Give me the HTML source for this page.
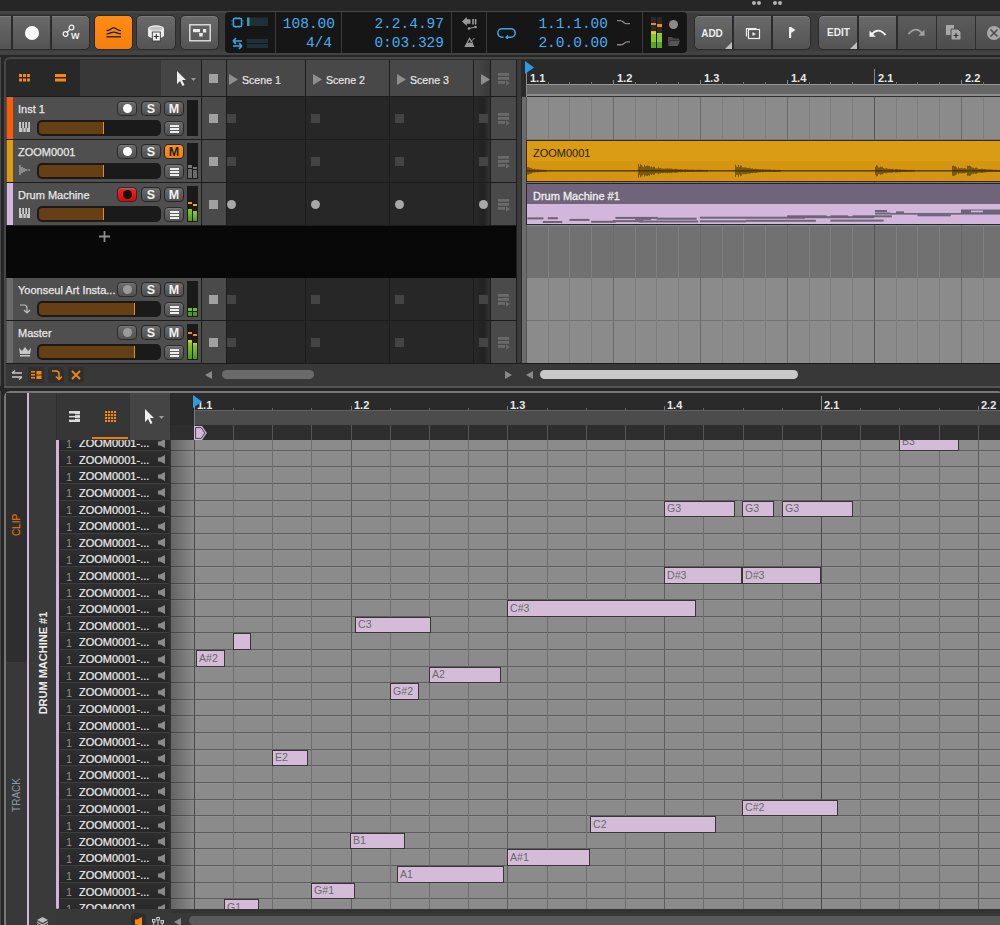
<!DOCTYPE html><html><head><meta charset="utf-8"><style>
*{margin:0;padding:0;box-sizing:border-box}
html,body{width:1000px;height:925px;overflow:hidden;background:#2b2b2b;font-family:"Liberation Sans",sans-serif}
.a{position:absolute}
.t{position:absolute;white-space:nowrap;line-height:1}
.btn{position:absolute;background:linear-gradient(#6a6a6a,#525252);border:1px solid #2a2a2a;border-radius:4px;box-shadow:inset 0 1px 0 #7a7a7a}
.sb{position:absolute;background:linear-gradient(#6c6c6c,#4e4e4e);border:1px solid #262626;border-radius:4px;color:#f2f2f2;font-weight:bold;font-size:12.5px;text-align:center;line-height:14px}
.mono{font-family:"Liberation Mono",monospace;color:#46aef2}
</style></head><body>
<div class="a " style="left:0px;top:0px;width:1000px;height:11px;background:#262626"></div><div class="a " style="left:0px;top:11px;width:1000px;height:44px;background:#3c3c3c;border-top:2px solid #474747;border-bottom:4px solid #424242"></div><div class="a " style="left:0px;top:55px;width:1000px;height:3px;background:#262626"></div><div class="a " style="left:752px;top:1px;width:4px;height:4px;background:#b4b4b4;border-radius:50%"></div><div class="a " style="left:757px;top:1px;width:4px;height:4px;background:#b4b4b4;border-radius:50%"></div><div class="a " style="left:773px;top:1px;width:4px;height:4px;background:#b4b4b4;border-radius:50%"></div><div class="a " style="left:778px;top:1px;width:4px;height:4px;background:#b4b4b4;border-radius:50%"></div><div class="a " style="left:-5px;top:15px;width:17px;height:35px;background:linear-gradient(#6a6a6a,#535353);border:1px solid #2b2b2b;box-shadow:inset 0 1px 0 #7c7c7c;border-radius:0 0 0 0"></div><div class="a " style="left:12px;top:15px;width:39px;height:35px;background:linear-gradient(#6a6a6a,#535353);border:1px solid #2b2b2b;box-shadow:inset 0 1px 0 #7c7c7c;"><div class="a" style="left:12px;top:10px;width:14px;height:14px;border-radius:50%;background:#fff"></div></div><div class="a " style="left:51px;top:15px;width:39px;height:35px;background:linear-gradient(#6a6a6a,#535353);border:1px solid #2b2b2b;box-shadow:inset 0 1px 0 #7c7c7c;border-radius:0 5px 5px 0"><svg class="a" style="left:10px;top:8px" width="20" height="18" viewBox="0 0 20 18"><circle cx="3.5" cy="10" r="2.3" fill="none" stroke="#eee" stroke-width="1.3"/><circle cx="9.5" cy="3.5" r="2.3" fill="none" stroke="#eee" stroke-width="1.3"/><line x1="5" y1="8.5" x2="8" y2="5.2" stroke="#eee" stroke-width="1.3"/><text x="9" y="15" font-family="Liberation Sans" font-weight="bold" font-size="9" fill="#eee">W</text></svg></div><div class="a " style="left:94px;top:15px;width:39px;height:35px;background:linear-gradient(#ff8c14,#f47f0c);border:1px solid #2b2b2b;border-radius:5px"><svg class="a" style="left:11px;top:11px" width="16" height="13" viewBox="0 0 16 13"><g fill="none" stroke="#1a1a1a" stroke-width="1.3"><path d="M0.5 3.7C4 3.7 5 0.9 7.75 0.9S11.5 3.7 15 3.7"/><path d="M0.5 6.8C4 6.8 5 5.1 7.75 5.1S11.5 6.8 15 6.8"/><path d="M0.5 9.8H15"/></g></svg></div><div class="a " style="left:136px;top:15px;width:40px;height:35px;background:linear-gradient(#6a6a6a,#535353);border:1px solid #2b2b2b;box-shadow:inset 0 1px 0 #7c7c7c;border-radius:5px"></div><svg class="a" style="left:147px;top:25px" width="19" height="17" viewBox="0 0 19 17"><path d="M1 3.2A8 2.9 0 0 1 17 3.2V10.5A8 2.9 0 0 1 1 10.5Z" fill="#ececec"/><ellipse cx="9" cy="3.5" rx="6.8" ry="2" fill="#c4c4c4"/><rect x="5.3" y="7" width="8" height="9" fill="#f4f4f4" stroke="#3a3a3a" stroke-width="0.9"/><path d="M9.3 9v5M6.8 11.5h5" stroke="#2a2a2a" stroke-width="1.1"/></svg><div class="a " style="left:180px;top:15px;width:39px;height:35px;background:linear-gradient(#6a6a6a,#535353);border:1px solid #2b2b2b;box-shadow:inset 0 1px 0 #7c7c7c;border-radius:5px"></div><svg class="a" style="left:189px;top:24px" width="22" height="18" viewBox="0 0 22 18"><rect x="0.8" y="0.8" width="20.4" height="16" fill="none" stroke="#ececec" stroke-width="1.3"/><rect x="4" y="5" width="7" height="3.2" fill="#ececec"/><rect x="14" y="5" width="3.2" height="3.5" fill="#ececec"/><rect x="10.2" y="9" width="3.5" height="3.5" fill="#ececec"/></svg><div class="a " style="left:225px;top:12px;width:462px;height:41px;background:#161616;border-radius:4px"></div><div class="a " style="left:275px;top:12px;width:1px;height:41px;background:#3c3c3c"></div><div class="a " style="left:341px;top:12px;width:1px;height:41px;background:#3c3c3c"></div><div class="a " style="left:451px;top:12px;width:1px;height:41px;background:#3c3c3c"></div><div class="a " style="left:486px;top:12px;width:1px;height:41px;background:#3c3c3c"></div><div class="a " style="left:642px;top:12px;width:1px;height:41px;background:#3c3c3c"></div><svg class="a" style="left:231px;top:17px" width="40" height="34" viewBox="0 0 40 34"><rect x="2.5" y="1.5" width="8" height="8" rx="0.5" fill="none" stroke="#3aa6e8" stroke-width="1.4"/><g fill="#3aa6e8"><rect x="0.5" y="3.5" width="1.2" height="1"/><rect x="0.5" y="6.5" width="1.2" height="1"/><rect x="11.3" y="3.5" width="1.2" height="1"/><rect x="11.3" y="6.5" width="1.2" height="1"/><rect x="4.5" y="0" width="1" height="1"/><rect x="7.5" y="0" width="1" height="1"/><rect x="4.5" y="10" width="1" height="1"/><rect x="7.5" y="10" width="1" height="1"/></g><rect x="16" y="0.5" width="21" height="8.5" fill="#1e3038"/><rect x="16" y="0.5" width="2.5" height="8.5" fill="#3e9aa8"/><path d="M2 24h9M2 24l3-2.8M2 24l3 2.8M11 29H2M11 29l-3-2.8M11 29l-3 2.8" stroke="#3aa6e8" stroke-width="1.6" fill="none"/><rect x="16" y="22" width="21" height="4" fill="#1e3038"/><rect x="16" y="27" width="21" height="4" fill="#1e3038"/></svg><div class="t mono" style="left:279px;top:16.5px;font-size:14.5px;width:56px;text-align:right">108.00</div><div class="t mono" style="left:279px;top:35.5px;font-size:14.5px;width:53px;text-align:right">4/4</div><div class="t mono" style="left:338px;top:16.5px;font-size:14.5px;width:106px;text-align:right">2.2.4.97</div><div class="t mono" style="left:338px;top:35.5px;font-size:14.5px;width:106px;text-align:right">0:03.329</div><div class="t mono" style="left:498px;top:16.5px;font-size:14.5px;width:110px;text-align:right">1.1.1.00</div><div class="t mono" style="left:498px;top:35.5px;font-size:14.5px;width:110px;text-align:right">2.0.0.00</div><svg class="a" style="left:459px;top:17px" width="20" height="32" viewBox="0 0 20 32"><path d="M3 4.5L7.8 0V2.2H11.5V6.8H7.8V9z" fill="#9a9a9a"/><rect x="13.2" y="2" width="1.6" height="5.5" fill="#9a9a9a"/><rect x="15.8" y="2" width="1.6" height="5.5" fill="#9a9a9a"/><path d="M10 11.5L16.5 10" stroke="#9a9a9a" stroke-width="1"/><circle cx="10" cy="11.5" r="1.3" fill="#9a9a9a"/><circle cx="16.5" cy="10" r="1.3" fill="#9a9a9a"/><path d="M6 30L10.5 21.5 13.5 26" fill="none" stroke="#9a9a9a" stroke-width="1.2"/><path d="M6 30L8 26H13.5L15.5 30z" fill="#9a9a9a"/><path d="M9.5 27L15.5 21" stroke="#9a9a9a" stroke-width="1"/></svg><svg class="a" style="left:497px;top:27px" width="20" height="12" viewBox="0 0 20 12"><path d="M6.5 10.2H5a4.2 4.2 0 0 1 0-8.4h9a4.2 4.2 0 0 1 0 8.4h-4" fill="none" stroke="#3aa6e8" stroke-width="1.5"/><path d="M8 10.3l3-2.6v5.2z" fill="#3aa6e8"/></svg><svg class="a" style="left:616px;top:18px" width="16" height="30" viewBox="0 0 16 30"><path d="M1 2.6H4.5C7 2.6 7.5 5.6 10 5.6H14M1 26.8H5.5C8 26.8 8.5 23.9 11 23.9H14" fill="none" stroke="#888" stroke-width="1.4"/></svg><div class="a " style="left:651px;top:17px;width:5px;height:31px;background:linear-gradient(#2a2a2a 0 18%,#f08a1e 18% 27%,#2a2a2a 27% 46%,#f0b020 46% 50%,#d8d040 50% 54%,#8ac826 54% 80%,#5aa820 80%)"></div><div class="a " style="left:657px;top:17px;width:5px;height:31px;background:linear-gradient(#2a2a2a 0 23%,#f08a1e 23% 32%,#2a2a2a 32% 51%,#b0c830 51% 56%,#8ac826 56% 80%,#5aa820 80%)"></div><div class="a " style="left:669px;top:20px;width:9px;height:9px;background:#8a8a8a;border-radius:50%"></div><svg class="a" style="left:667px;top:36px" width="14" height="11" viewBox="0 0 14 11"><path d="M1 1h4l1.5 1.5H12V4H3.5L1 10z" fill="#4a4a4a"/><path d="M3.5 4.5H13L11 10H1z" fill="#555"/></svg><div class="a " style="left:694px;top:15px;width:39px;height:35px;background:linear-gradient(#6a6a6a,#535353);border:1px solid #2b2b2b;box-shadow:inset 0 1px 0 #7c7c7c;border-radius:5px 0 0 5px"><div class="t" style="left:-2px;width:38px;text-align:center;top:12.5px;font-size:10px;font-weight:bold;color:#eee">ADD</div><div class="a" style="right:0;bottom:0;width:0;height:0;border-left:7px solid transparent;border-bottom:7px solid #bdbdbd"></div></div><div class="a " style="left:733px;top:15px;width:39px;height:35px;background:linear-gradient(#6a6a6a,#535353);border:1px solid #2b2b2b;box-shadow:inset 0 1px 0 #7c7c7c;"><svg class="a" style="left:11px;top:10px" width="16" height="14" viewBox="0 0 16 14"><rect x="3.5" y="3.5" width="11" height="9" fill="#555" stroke="#eee" stroke-width="1.2"/><path d="M1.5 10.5v-8h10" fill="none" stroke="#eee" stroke-width="1.2"/><path d="M7.5 6v4l3.5-2z" fill="#eee"/></svg></div><div class="a " style="left:772px;top:15px;width:39px;height:35px;background:linear-gradient(#6a6a6a,#535353);border:1px solid #2b2b2b;box-shadow:inset 0 1px 0 #7c7c7c;border-radius:0 5px 5px 0"><svg class="a" style="left:16px;top:11px" width="8" height="12" viewBox="0 0 8 12"><rect x="0" y="0" width="2.2" height="11" fill="#eee"/><path d="M2 0l4.5 3-4.5 3z" fill="#eee"/></svg></div><div class="a " style="left:818px;top:15px;width:40px;height:35px;background:linear-gradient(#6a6a6a,#535353);border:1px solid #2b2b2b;box-shadow:inset 0 1px 0 #7c7c7c;border-radius:5px 0 0 5px"><div class="t" style="left:0;width:39px;text-align:center;top:12px;font-size:10px;font-weight:bold;color:#eee">EDIT</div><div class="a" style="right:0;bottom:0;width:0;height:0;border-left:7px solid transparent;border-bottom:7px solid #bdbdbd"></div></div><div class="a " style="left:858px;top:15px;width:39px;height:35px;background:linear-gradient(#6a6a6a,#535353);border:1px solid #2b2b2b;box-shadow:inset 0 1px 0 #7c7c7c;"><svg class="a" style="left:8px;top:12px" width="22" height="12" viewBox="0 0 22 12"><path d="M4.5 6.5Q11 -1.5 18.5 7" fill="none" stroke="#f4f4f4" stroke-width="1.9"/><path d="M2.5 2.5v6.2h6.2z" fill="#f4f4f4"/></svg></div><div class="a " style="left:897px;top:15px;width:103px;height:35px;background:linear-gradient(#5c5c5c,#4c4c4c);border:1px solid #2b2b2b;border-right:none"></div><div class="a " style="left:936px;top:15px;width:1px;height:35px;background:#2e2e2e"></div><div class="a " style="left:975px;top:15px;width:1px;height:35px;background:#2e2e2e"></div><svg class="a" style="left:905px;top:27px" width="22" height="12" viewBox="0 0 22 12"><path d="M3.5 7Q11 -1.5 17.5 6.5" fill="none" stroke="#a0a0a0" stroke-width="1.9"/><path d="M19.5 2.5v6.2h-6.2z" fill="#a0a0a0"/></svg><svg class="a" style="left:946px;top:25px" width="18" height="16" viewBox="0 0 18 16"><rect x="0" y="0" width="8" height="10" fill="#a8a8a8"/><path d="M5 4h7l3 3v8H5z" fill="#a8a8a8" stroke="#4e4e4e" stroke-width="1"/><path d="M10 8v5M7.5 10.5h5" stroke="#333" stroke-width="1.2"/></svg><svg class="a" style="left:986px;top:25px" width="14" height="16" viewBox="0 0 14 16"><circle cx="8" cy="8" r="7" fill="#a8a8a8"/><path d="M4.5 4.5l7 7M11.5 4.5l-7 7" stroke="#4e4e4e" stroke-width="1.6"/></svg><div class="a " style="left:0px;top:57px;width:4px;height:868px;background:#262626"></div><div class="a " style="left:0px;top:57px;width:1px;height:868px;background:#4a4a4a"></div><div class="a " style="left:4px;top:57px;width:996px;height:332px;background:#2c2c2c;border:2px solid #474747;border-right:none;border-radius:6px 0 0 6px"></div><div class="a " style="left:6px;top:60px;width:74px;height:36px;background:#282828"></div><div class="a " style="left:80px;top:60px;width:81px;height:36px;background:#383838"></div><div class="a " style="left:161px;top:60px;width:40px;height:36px;background:#454545"></div><div class="a " style="left:201px;top:60px;width:1px;height:303px;background:#1c1c1c"></div><svg class="a" style="left:19px;top:74px" width="12" height="9" viewBox="0 0 12 9"><g fill="#f7870f"><rect x="0" y="0" width="3" height="3"/><rect x="4" y="0" width="3" height="3"/><rect x="8" y="0" width="3" height="3"/><rect x="0" y="4.5" width="3" height="3"/><rect x="4" y="4.5" width="3" height="3"/><rect x="8" y="4.5" width="3" height="3"/></g></svg><svg class="a" style="left:55px;top:74px" width="12" height="9" viewBox="0 0 12 9"><g fill="#f7870f"><rect x="0" y="0" width="11" height="3"/><rect x="0" y="4.5" width="11" height="3"/></g></svg><svg class="a" style="left:176px;top:71px" width="22" height="16" viewBox="0 0 22 16"><path d="M1 0v13l3-3 2.5 5 2-1-2.5-5h4z" fill="#eee"/><path d="M15 7h5l-2.5 3z" fill="#9a9a9a"/></svg><div class="a " style="left:202px;top:60px;width:24px;height:36px;background:#4a4a4a"></div><div class="a " style="left:209px;top:74px;width:9px;height:9px;background:#a0a0a0"></div><div class="a " style="left:227px;top:60px;width:78px;height:36px;background:#484848"></div><svg class="a" style="left:229px;top:74px" width="10" height="12" viewBox="0 0 10 12"><path d="M0 0l9 5.5L0 11z" fill="#8e8e8e"/></svg><div class="t" style="left:242px;top:74.5px;font-size:10.6px;color:#e6e6e6;-webkit-text-stroke:0.2px #e6e6e6">Scene 1</div><div class="a " style="left:306px;top:60px;width:83px;height:36px;background:#484848"></div><svg class="a" style="left:313px;top:74px" width="10" height="12" viewBox="0 0 10 12"><path d="M0 0l9 5.5L0 11z" fill="#8e8e8e"/></svg><div class="t" style="left:326px;top:74.5px;font-size:10.6px;color:#e6e6e6;-webkit-text-stroke:0.2px #e6e6e6">Scene 2</div><div class="a " style="left:390px;top:60px;width:83px;height:36px;background:#484848"></div><svg class="a" style="left:397px;top:74px" width="10" height="12" viewBox="0 0 10 12"><path d="M0 0l9 5.5L0 11z" fill="#8e8e8e"/></svg><div class="t" style="left:410px;top:74.5px;font-size:10.6px;color:#e6e6e6;-webkit-text-stroke:0.2px #e6e6e6">Scene 3</div><div class="a " style="left:474px;top:60px;width:16px;height:36px;background:linear-gradient(90deg,#484848,#3a3a3a)"></div><svg class="a" style="left:481px;top:74px" width="10" height="12" viewBox="0 0 10 12"><path d="M0 0l9 5.5L0 11z" fill="#8e8e8e"/></svg><div class="a " style="left:226px;top:60px;width:1px;height:303px;background:#1c1c1c"></div><div class="a " style="left:305px;top:60px;width:1px;height:303px;background:#1c1c1c"></div><div class="a " style="left:389px;top:60px;width:1px;height:303px;background:#1c1c1c"></div><div class="a " style="left:473px;top:60px;width:1px;height:303px;background:#1c1c1c"></div><div class="a " style="left:490px;top:60px;width:1px;height:303px;background:#1c1c1c"></div><div class="a " style="left:491px;top:60px;width:25px;height:36px;background:#4a4a4a"></div><svg class="a" style="left:498px;top:73px" width="13" height="13" viewBox="0 0 13 13"><g fill="#6a6a6a"><rect x="0" y="0" width="11" height="2.8"/><rect x="0" y="4" width="11" height="2.8"/><rect x="0" y="8" width="7" height="2.8"/><path d="M8 7.5l4 2.5-4 2.5z"/></g></svg><div class="a " style="left:6px;top:96px;width:510px;height:1px;background:#1c1c1c"></div><div class="a " style="left:6px;top:97px;width:195px;height:42px;background:#4f4f4f"></div><div class="a " style="left:7px;top:97px;width:6px;height:42px;background:#ff5a00"></div><div class="a " style="left:6px;top:139px;width:510px;height:1px;background:#1c1c1c"></div><div class="t" style="left:18px;top:104px;font-size:11px;color:#e8e8e8;-webkit-text-stroke:0.25px #e8e8e8">Inst 1</div><svg class="a" style="left:19px;top:122px" width="12" height="11" viewBox="0 0 12 11"><rect x="0" y="0" width="11" height="10" fill="#c8c8c8"/><g fill="#4f4f4f"><rect x="2" y="0" width="1.2" height="6"/><rect x="5" y="0" width="1.2" height="6"/><rect x="8" y="0" width="1.2" height="6"/><rect x="3.5" y="6" width="0.8" height="4"/><rect x="6.8" y="6" width="0.8" height="4"/></g></svg><div class="a " style="left:37px;top:120px;width:124px;height:16px;background:#1a1a1a;border-radius:5px"></div><div class="a " style="left:39px;top:122px;width:65px;height:12px;background:#663f15;border-radius:3px 0 0 3px"></div><div class="a " style="left:102.5px;top:122px;width:1.5px;height:12px;background:#ec8a1e"></div><div class="a btn" style="left:117px;top:101px;width:20px;height:15px;"><div class="a" style="left:5px;top:2px;width:9px;height:9px;border-radius:50%;background:#fff"></div></div><div class="sb" style="left:141px;top:101px;width:20px;height:15px">S</div><div class="sb" style="left:164px;top:101px;width:20px;height:15px">M</div><div class="a btn" style="left:164px;top:121px;width:20px;height:15px;"><div class="a" style="left:5px;top:3px;width:9px;height:2px;background:#eee"></div><div class="a" style="left:5px;top:6px;width:9px;height:2px;background:#eee"></div><div class="a" style="left:5px;top:9px;width:9px;height:2px;background:#eee"></div></div><div class="a " style="left:187px;top:100px;width:11px;height:36px;background:#1a1a1a"></div><div class="a " style="left:202px;top:97px;width:24px;height:42px;background:#4a4a4a"></div><div class="a " style="left:209px;top:114px;width:9px;height:9px;background:#a0a0a0"></div><div class="a " style="left:227px;top:97px;width:78px;height:42px;background:#272727"></div><div class="a " style="left:227px;top:114px;width:9px;height:9px;background:#444"></div><div class="a " style="left:306px;top:97px;width:83px;height:42px;background:#272727"></div><div class="a " style="left:311px;top:114px;width:9px;height:9px;background:#444"></div><div class="a " style="left:390px;top:97px;width:83px;height:42px;background:#272727"></div><div class="a " style="left:395px;top:114px;width:9px;height:9px;background:#444"></div><div class="a " style="left:474px;top:97px;width:16px;height:42px;background:linear-gradient(90deg,#282828,#222 60%,#333)"></div><div class="a " style="left:479px;top:114px;width:9px;height:9px;background:#444"></div><div class="a " style="left:491px;top:97px;width:25px;height:42px;background:#4a4a4a"></div><svg class="a" style="left:498px;top:113px" width="13" height="13" viewBox="0 0 13 13"><g fill="#6a6a6a"><rect x="0" y="0" width="11" height="2.8"/><rect x="0" y="4" width="11" height="2.8"/><rect x="0" y="8" width="7" height="2.8"/><path d="M8 7.5l4 2.5-4 2.5z"/></g></svg><div class="a " style="left:6px;top:140px;width:195px;height:42px;background:#4f4f4f"></div><div class="a " style="left:7px;top:140px;width:6px;height:42px;background:#e09a10"></div><div class="a " style="left:6px;top:182px;width:510px;height:1px;background:#1c1c1c"></div><div class="t" style="left:18px;top:147px;font-size:11px;color:#e8e8e8;-webkit-text-stroke:0.25px #e8e8e8">ZOOM0001</div><svg class="a" style="left:19px;top:164px" width="12" height="12" viewBox="0 0 12 12"><path d="M1 1v10M3 3v6M5 4v4M7 5v2M9 5.5v1M11 6h-1" stroke="#bcbcbc" stroke-width="1.1"/></svg><div class="a " style="left:37px;top:163px;width:124px;height:16px;background:#1a1a1a;border-radius:5px"></div><div class="a " style="left:39px;top:165px;width:65px;height:12px;background:#663f15;border-radius:3px 0 0 3px"></div><div class="a " style="left:102.5px;top:165px;width:1.5px;height:12px;background:#ec8a1e"></div><div class="a btn" style="left:117px;top:144px;width:20px;height:15px;"><div class="a" style="left:5px;top:2px;width:9px;height:9px;border-radius:50%;background:#fff"></div></div><div class="sb" style="left:141px;top:144px;width:20px;height:15px">S</div><div class="sb" style="left:164px;top:144px;width:20px;height:15px;background:linear-gradient(#ff9020,#f47f0c);color:#222">M</div><div class="a btn" style="left:164px;top:164px;width:20px;height:15px;"><div class="a" style="left:5px;top:3px;width:9px;height:2px;background:#eee"></div><div class="a" style="left:5px;top:6px;width:9px;height:2px;background:#eee"></div><div class="a" style="left:5px;top:9px;width:9px;height:2px;background:#eee"></div></div><div class="a " style="left:187px;top:143px;width:11px;height:36px;background:#1a1a1a"></div><div class="a " style="left:188px;top:165px;width:4px;height:13px;background:linear-gradient(#777 0 20%,#1a1a1a 20% 30%,#6a6a6a 30%)"></div><div class="a " style="left:193px;top:167px;width:4px;height:11px;background:linear-gradient(#777 0 20%,#1a1a1a 20% 30%,#6a6a6a 30%)"></div><div class="a " style="left:202px;top:140px;width:24px;height:42px;background:#4a4a4a"></div><div class="a " style="left:209px;top:157px;width:9px;height:9px;background:#a0a0a0"></div><div class="a " style="left:227px;top:140px;width:78px;height:42px;background:#272727"></div><div class="a " style="left:227px;top:157px;width:9px;height:9px;background:#444"></div><div class="a " style="left:306px;top:140px;width:83px;height:42px;background:#272727"></div><div class="a " style="left:311px;top:157px;width:9px;height:9px;background:#444"></div><div class="a " style="left:390px;top:140px;width:83px;height:42px;background:#272727"></div><div class="a " style="left:395px;top:157px;width:9px;height:9px;background:#444"></div><div class="a " style="left:474px;top:140px;width:16px;height:42px;background:linear-gradient(90deg,#282828,#222 60%,#333)"></div><div class="a " style="left:479px;top:157px;width:9px;height:9px;background:#444"></div><div class="a " style="left:491px;top:140px;width:25px;height:42px;background:#4a4a4a"></div><svg class="a" style="left:498px;top:156px" width="13" height="13" viewBox="0 0 13 13"><g fill="#6a6a6a"><rect x="0" y="0" width="11" height="2.8"/><rect x="0" y="4" width="11" height="2.8"/><rect x="0" y="8" width="7" height="2.8"/><path d="M8 7.5l4 2.5-4 2.5z"/></g></svg><div class="a " style="left:6px;top:183px;width:195px;height:42px;background:#4f4f4f"></div><div class="a " style="left:7px;top:183px;width:6px;height:42px;background:#d2b6e0"></div><div class="a " style="left:6px;top:225px;width:510px;height:1px;background:#1c1c1c"></div><div class="t" style="left:18px;top:190px;font-size:11px;color:#e8e8e8;-webkit-text-stroke:0.25px #e8e8e8">Drum Machine</div><svg class="a" style="left:19px;top:208px" width="12" height="11" viewBox="0 0 12 11"><rect x="0" y="0" width="11" height="10" fill="#c8c8c8"/><g fill="#4f4f4f"><rect x="2" y="0" width="1.2" height="6"/><rect x="5" y="0" width="1.2" height="6"/><rect x="8" y="0" width="1.2" height="6"/><rect x="3.5" y="6" width="0.8" height="4"/><rect x="6.8" y="6" width="0.8" height="4"/></g></svg><div class="a " style="left:37px;top:206px;width:124px;height:16px;background:#1a1a1a;border-radius:5px"></div><div class="a " style="left:39px;top:208px;width:65px;height:12px;background:#663f15;border-radius:3px 0 0 3px"></div><div class="a " style="left:102.5px;top:208px;width:1.5px;height:12px;background:#ec8a1e"></div><div class="a btn" style="left:117px;top:187px;width:20px;height:15px;background:linear-gradient(#ff2020,#d80808);"><div class="a" style="left:5px;top:2px;width:9px;height:9px;border-radius:50%;background:#111"></div></div><div class="sb" style="left:141px;top:187px;width:20px;height:15px">S</div><div class="sb" style="left:164px;top:187px;width:20px;height:15px">M</div><div class="a btn" style="left:164px;top:207px;width:20px;height:15px;"><div class="a" style="left:5px;top:3px;width:9px;height:2px;background:#eee"></div><div class="a" style="left:5px;top:6px;width:9px;height:2px;background:#eee"></div><div class="a" style="left:5px;top:9px;width:9px;height:2px;background:#eee"></div></div><div class="a " style="left:187px;top:186px;width:11px;height:36px;background:#1a1a1a"></div><div class="a " style="left:188px;top:201.5px;width:4px;height:2.5px;background:#f0901e"></div><div class="a " style="left:193px;top:203.5px;width:4px;height:2.5px;background:#e0b020"></div><div class="a " style="left:188px;top:209px;width:4px;height:12px;background:linear-gradient(#8ac826,#4a9a1c)"></div><div class="a " style="left:193px;top:211px;width:4px;height:10px;background:linear-gradient(#c0a030 0 8%,#8ac826 15%,#4a9a1c)"></div><div class="a " style="left:202px;top:183px;width:24px;height:42px;background:#4a4a4a"></div><div class="a " style="left:209px;top:200px;width:9px;height:9px;background:#a0a0a0"></div><div class="a " style="left:227px;top:183px;width:78px;height:42px;background:#272727"></div><div class="a " style="left:227px;top:200px;width:9px;height:9px;background:#a8a8a8;border-radius:50%"></div><div class="a " style="left:306px;top:183px;width:83px;height:42px;background:#272727"></div><div class="a " style="left:311px;top:200px;width:9px;height:9px;background:#a8a8a8;border-radius:50%"></div><div class="a " style="left:390px;top:183px;width:83px;height:42px;background:#272727"></div><div class="a " style="left:395px;top:200px;width:9px;height:9px;background:#a8a8a8;border-radius:50%"></div><div class="a " style="left:474px;top:183px;width:16px;height:42px;background:linear-gradient(90deg,#282828,#222 60%,#333)"></div><div class="a " style="left:479px;top:200px;width:9px;height:9px;background:#a8a8a8;border-radius:50%"></div><div class="a " style="left:491px;top:183px;width:25px;height:42px;background:#4a4a4a"></div><svg class="a" style="left:498px;top:199px" width="13" height="13" viewBox="0 0 13 13"><g fill="#6a6a6a"><rect x="0" y="0" width="11" height="2.8"/><rect x="0" y="4" width="11" height="2.8"/><rect x="0" y="8" width="7" height="2.8"/><path d="M8 7.5l4 2.5-4 2.5z"/></g></svg><div class="a " style="left:6px;top:278px;width:195px;height:42px;background:#4f4f4f"></div><div class="a " style="left:7px;top:278px;width:6px;height:42px;background:#6a6a6a"></div><div class="a " style="left:6px;top:320px;width:510px;height:1px;background:#1c1c1c"></div><div class="t" style="left:18px;top:285px;font-size:11px;color:#e8e8e8;-webkit-text-stroke:0.25px #e8e8e8">Yoonseul Art Insta...</div><svg class="a" style="left:19px;top:303px" width="12" height="12" viewBox="0 0 12 12"><path d="M1 2h4a3 3 0 0 1 3 3v5M5 7l3 3 3-3" fill="none" stroke="#c0c0c0" stroke-width="1.2"/></svg><div class="a " style="left:37px;top:301px;width:124px;height:16px;background:#1a1a1a;border-radius:5px"></div><div class="a " style="left:39px;top:303px;width:96px;height:12px;background:#663f15;border-radius:3px 0 0 3px"></div><div class="a " style="left:133.5px;top:303px;width:1.5px;height:12px;background:#ec8a1e"></div><div class="a btn" style="left:117px;top:282px;width:20px;height:15px;"><div class="a" style="left:5px;top:2px;width:9px;height:9px;border-radius:50%;background:#9a9a9a"></div></div><div class="sb" style="left:141px;top:282px;width:20px;height:15px">S</div><div class="sb" style="left:164px;top:282px;width:20px;height:15px">M</div><div class="a btn" style="left:164px;top:302px;width:20px;height:15px;"><div class="a" style="left:5px;top:3px;width:9px;height:2px;background:#eee"></div><div class="a" style="left:5px;top:6px;width:9px;height:2px;background:#eee"></div><div class="a" style="left:5px;top:9px;width:9px;height:2px;background:#eee"></div></div><div class="a " style="left:187px;top:281px;width:11px;height:36px;background:#1a1a1a"></div><div class="a " style="left:188px;top:308px;width:4px;height:8px;background:linear-gradient(#6ac020 0 40%,#1a1a1a 40% 50%,#4a9a1c 50%)"></div><div class="a " style="left:193px;top:308px;width:4px;height:8px;background:linear-gradient(#6ac020 0 40%,#1a1a1a 40% 50%,#4a9a1c 50%)"></div><div class="a " style="left:202px;top:278px;width:24px;height:42px;background:#4a4a4a"></div><div class="a " style="left:209px;top:295px;width:9px;height:9px;background:#a0a0a0"></div><div class="a " style="left:227px;top:278px;width:78px;height:42px;background:#272727"></div><div class="a " style="left:227px;top:295px;width:9px;height:9px;background:#444"></div><div class="a " style="left:306px;top:278px;width:83px;height:42px;background:#272727"></div><div class="a " style="left:311px;top:295px;width:9px;height:9px;background:#444"></div><div class="a " style="left:390px;top:278px;width:83px;height:42px;background:#272727"></div><div class="a " style="left:395px;top:295px;width:9px;height:9px;background:#444"></div><div class="a " style="left:474px;top:278px;width:16px;height:42px;background:linear-gradient(90deg,#282828,#222 60%,#333)"></div><div class="a " style="left:479px;top:295px;width:9px;height:9px;background:#444"></div><div class="a " style="left:491px;top:278px;width:25px;height:42px;background:#4a4a4a"></div><svg class="a" style="left:498px;top:294px" width="13" height="13" viewBox="0 0 13 13"><g fill="#6a6a6a"><rect x="0" y="0" width="11" height="2.8"/><rect x="0" y="4" width="11" height="2.8"/><rect x="0" y="8" width="7" height="2.8"/><path d="M8 7.5l4 2.5-4 2.5z"/></g></svg><div class="a " style="left:6px;top:321px;width:195px;height:42px;background:#4f4f4f"></div><div class="a " style="left:7px;top:321px;width:6px;height:42px;background:#6a6a6a"></div><div class="a " style="left:6px;top:363px;width:510px;height:1px;background:#1c1c1c"></div><div class="t" style="left:18px;top:328px;font-size:11px;color:#e8e8e8;-webkit-text-stroke:0.25px #e8e8e8">Master</div><svg class="a" style="left:19px;top:346px" width="12" height="11" viewBox="0 0 12 11"><path d="M0 2l3 3 3-4 3 4 3-3-1 6H1z" fill="#c8c8c8"/><rect x="1" y="9" width="10" height="1.5" fill="#c8c8c8"/></svg><div class="a " style="left:37px;top:344px;width:124px;height:16px;background:#1a1a1a;border-radius:5px"></div><div class="a " style="left:39px;top:346px;width:96px;height:12px;background:#663f15;border-radius:3px 0 0 3px"></div><div class="a " style="left:133.5px;top:346px;width:1.5px;height:12px;background:#ec8a1e"></div><div class="a btn" style="left:117px;top:325px;width:20px;height:15px;"><div class="a" style="left:5px;top:2px;width:9px;height:9px;border-radius:50%;background:#9a9a9a"></div></div><div class="sb" style="left:141px;top:325px;width:20px;height:15px">S</div><div class="sb" style="left:164px;top:325px;width:20px;height:15px">M</div><div class="a btn" style="left:164px;top:345px;width:20px;height:15px;"><div class="a" style="left:5px;top:3px;width:9px;height:2px;background:#eee"></div><div class="a" style="left:5px;top:6px;width:9px;height:2px;background:#eee"></div><div class="a" style="left:5px;top:9px;width:9px;height:2px;background:#eee"></div></div><div class="a " style="left:187px;top:324px;width:11px;height:36px;background:#1a1a1a"></div><div class="a " style="left:188px;top:332px;width:4px;height:2px;background:#f08a1e"></div><div class="a " style="left:193px;top:334px;width:4px;height:2px;background:#f08a1e"></div><div class="a " style="left:188px;top:340px;width:4px;height:19px;background:linear-gradient(#e8c030 0 8%,#8ac826 15%,#4a9a1c)"></div><div class="a " style="left:193px;top:343px;width:4px;height:16px;background:linear-gradient(#e8c030 0 5%,#8ac826 12%,#4a9a1c)"></div><div class="a " style="left:202px;top:321px;width:24px;height:42px;background:#4a4a4a"></div><div class="a " style="left:209px;top:338px;width:9px;height:9px;background:#a0a0a0"></div><div class="a " style="left:227px;top:321px;width:78px;height:42px;background:#272727"></div><div class="a " style="left:227px;top:338px;width:9px;height:9px;background:#444"></div><div class="a " style="left:306px;top:321px;width:83px;height:42px;background:#272727"></div><div class="a " style="left:311px;top:338px;width:9px;height:9px;background:#444"></div><div class="a " style="left:390px;top:321px;width:83px;height:42px;background:#272727"></div><div class="a " style="left:395px;top:338px;width:9px;height:9px;background:#444"></div><div class="a " style="left:474px;top:321px;width:16px;height:42px;background:linear-gradient(90deg,#282828,#222 60%,#333)"></div><div class="a " style="left:479px;top:338px;width:9px;height:9px;background:#444"></div><div class="a " style="left:491px;top:321px;width:25px;height:42px;background:#4a4a4a"></div><svg class="a" style="left:498px;top:337px" width="13" height="13" viewBox="0 0 13 13"><g fill="#6a6a6a"><rect x="0" y="0" width="11" height="2.8"/><rect x="0" y="4" width="11" height="2.8"/><rect x="0" y="8" width="7" height="2.8"/><path d="M8 7.5l4 2.5-4 2.5z"/></g></svg><div class="a " style="left:6px;top:226px;width:510px;height:52px;background:#080808"></div><svg class="a" style="left:99px;top:231px" width="11" height="11" viewBox="0 0 11 11"><path d="M5.5 0v11M0 5.5h11" stroke="#8c8c8c" stroke-width="1.8"/></svg><div class="a " style="left:516px;top:60px;width:1px;height:303px;background:#1c1c1c"></div><div class="a " style="left:517px;top:60px;width:4px;height:303px;background:#3a3a3a"></div><div class="a " style="left:6px;top:363px;width:510px;height:23px;background:#383838"></div><div class="a " style="left:6px;top:363px;width:994px;height:1px;background:#1c1c1c"></div><div class="a " style="left:6px;top:364px;width:994px;height:22px;background:#383838"></div><svg class="a" style="left:11px;top:370px" width="12" height="10" viewBox="0 0 12 10"><path d="M1 3h10M1 3l3-2.5M11 7H1M11 7l-3 2.5" stroke="#c8c8c8" stroke-width="1.3" fill="none"/></svg><div class="a " style="left:28px;top:367px;width:16px;height:16px;background:#303030;border-radius:3px"></div><div class="a " style="left:48px;top:367px;width:16px;height:16px;background:#303030;border-radius:3px"></div><div class="a " style="left:68px;top:367px;width:16px;height:16px;background:#303030;border-radius:3px"></div><svg class="a" style="left:31px;top:371px" width="11" height="8" viewBox="0 0 11 8"><g fill="#f7870f"><rect x="0" y="0" width="4" height="1.5"/><rect x="0" y="3" width="4" height="1.5"/><rect x="0" y="6" width="4" height="1.5"/><rect x="5.5" y="0" width="5" height="3.5"/><rect x="5.5" y="4.5" width="5" height="3.5"/></g></svg><svg class="a" style="left:51px;top:370px" width="11" height="11" viewBox="0 0 11 11"><path d="M1 1h4a3 3 0 0 1 3 3v5M5 6.5l3 3 3-3" fill="none" stroke="#f7870f" stroke-width="1.5"/></svg><svg class="a" style="left:71px;top:370px" width="10" height="10" viewBox="0 0 10 10"><path d="M1 1l8 8M9 1l-8 8" stroke="#f7870f" stroke-width="1.8"/></svg><svg class="a" style="left:205px;top:371px" width="8" height="8" viewBox="0 0 8 8"><path d="M7 0v8L0 4z" fill="#8a8a8a"/></svg><div class="a " style="left:222px;top:370px;width:92px;height:9px;background:#6a6a6a;border-radius:5px"></div><svg class="a" style="left:505px;top:371px" width="8" height="8" viewBox="0 0 8 8"><path d="M0 0v8l7-4z" fill="#8a8a8a"/></svg><svg class="a" style="left:526px;top:371px" width="8" height="8" viewBox="0 0 8 8"><path d="M7 0v8L0 4z" fill="#8a8a8a"/></svg><div class="a " style="left:540px;top:370px;width:258px;height:9px;background:#c8c8c8;border-radius:5px"></div><div class="a " style="left:521px;top:60px;width:479px;height:25px;background:#2a2a2a"></div><div class="a " style="left:521px;top:85px;width:479px;height:11px;background:#2a2a2a"></div><div class="a " style="left:526px;top:84px;width:474px;height:12px;background:#666;border-top:1px solid #9a9a9a;border-bottom:2px solid #8e8e8e"></div><div class="a " style="left:521px;top:96px;width:479px;height:1px;background:#303030"></div><div class="a " style="left:521px;top:97px;width:1px;height:266px;background:#2a2a2a"></div><div class="a " style="left:522px;top:97px;width:4px;height:266px;background:#6c6c6c"></div><div class="a " style="left:526px;top:97px;width:474px;height:266px;background:#8b8b8b"></div><div class="a " style="left:526px;top:226px;width:474px;height:52px;background:#717171"></div><div class="a " style="left:526px;top:320px;width:474px;height:1px;background:#747474"></div><div class="a " style="left:526px;top:139px;width:474px;height:1px;background:#777"></div><div class="a " style="left:526px;top:182px;width:474px;height:1px;background:#777"></div><div class="a " style="left:526px;top:97px;width:1px;height:266px;background:#555"></div><div class="a " style="left:526px;top:69px;width:1px;height:16px;background:#8a8a8a"></div><div class="t" style="left:530px;top:73px;font-size:11px;font-weight:bold;color:#e8e8e8">1.1</div><div class="a " style="left:548px;top:97px;width:1px;height:266px;background:#7e7e7e"></div><div class="a " style="left:548px;top:82px;width:1px;height:3px;background:#777"></div><div class="a " style="left:569px;top:97px;width:1px;height:266px;background:#7e7e7e"></div><div class="a " style="left:569px;top:82px;width:1px;height:3px;background:#777"></div><div class="a " style="left:591px;top:97px;width:1px;height:266px;background:#7e7e7e"></div><div class="a " style="left:591px;top:82px;width:1px;height:3px;background:#777"></div><div class="a " style="left:613px;top:97px;width:1px;height:266px;background:#6a6a6a"></div><div class="a " style="left:613px;top:80px;width:1px;height:5px;background:#8a8a8a"></div><div class="t" style="left:617px;top:73px;font-size:11px;font-weight:bold;color:#e8e8e8">1.2</div><div class="a " style="left:635px;top:97px;width:1px;height:266px;background:#7e7e7e"></div><div class="a " style="left:635px;top:82px;width:1px;height:3px;background:#777"></div><div class="a " style="left:656px;top:97px;width:1px;height:266px;background:#7e7e7e"></div><div class="a " style="left:656px;top:82px;width:1px;height:3px;background:#777"></div><div class="a " style="left:678px;top:97px;width:1px;height:266px;background:#7e7e7e"></div><div class="a " style="left:678px;top:82px;width:1px;height:3px;background:#777"></div><div class="a " style="left:700px;top:97px;width:1px;height:266px;background:#6a6a6a"></div><div class="a " style="left:700px;top:80px;width:1px;height:5px;background:#8a8a8a"></div><div class="t" style="left:704px;top:73px;font-size:11px;font-weight:bold;color:#e8e8e8">1.3</div><div class="a " style="left:722px;top:97px;width:1px;height:266px;background:#7e7e7e"></div><div class="a " style="left:722px;top:82px;width:1px;height:3px;background:#777"></div><div class="a " style="left:743px;top:97px;width:1px;height:266px;background:#7e7e7e"></div><div class="a " style="left:743px;top:82px;width:1px;height:3px;background:#777"></div><div class="a " style="left:765px;top:97px;width:1px;height:266px;background:#7e7e7e"></div><div class="a " style="left:765px;top:82px;width:1px;height:3px;background:#777"></div><div class="a " style="left:787px;top:97px;width:1px;height:266px;background:#6a6a6a"></div><div class="a " style="left:787px;top:80px;width:1px;height:5px;background:#8a8a8a"></div><div class="t" style="left:791px;top:73px;font-size:11px;font-weight:bold;color:#e8e8e8">1.4</div><div class="a " style="left:809px;top:97px;width:1px;height:266px;background:#7e7e7e"></div><div class="a " style="left:809px;top:82px;width:1px;height:3px;background:#777"></div><div class="a " style="left:830px;top:97px;width:1px;height:266px;background:#7e7e7e"></div><div class="a " style="left:830px;top:82px;width:1px;height:3px;background:#777"></div><div class="a " style="left:852px;top:97px;width:1px;height:266px;background:#7e7e7e"></div><div class="a " style="left:852px;top:82px;width:1px;height:3px;background:#777"></div><div class="a " style="left:874px;top:97px;width:1px;height:266px;background:#555"></div><div class="a " style="left:874px;top:69px;width:1px;height:16px;background:#8a8a8a"></div><div class="t" style="left:878px;top:73px;font-size:11px;font-weight:bold;color:#e8e8e8">2.1</div><div class="a " style="left:896px;top:97px;width:1px;height:266px;background:#7e7e7e"></div><div class="a " style="left:896px;top:82px;width:1px;height:3px;background:#777"></div><div class="a " style="left:917px;top:97px;width:1px;height:266px;background:#7e7e7e"></div><div class="a " style="left:917px;top:82px;width:1px;height:3px;background:#777"></div><div class="a " style="left:939px;top:97px;width:1px;height:266px;background:#7e7e7e"></div><div class="a " style="left:939px;top:82px;width:1px;height:3px;background:#777"></div><div class="a " style="left:961px;top:97px;width:1px;height:266px;background:#6a6a6a"></div><div class="a " style="left:961px;top:80px;width:1px;height:5px;background:#8a8a8a"></div><div class="t" style="left:965px;top:73px;font-size:11px;font-weight:bold;color:#e8e8e8">2.2</div><div class="a " style="left:983px;top:97px;width:1px;height:266px;background:#7e7e7e"></div><div class="a " style="left:983px;top:82px;width:1px;height:3px;background:#777"></div><div class="a " style="left:526px;top:74px;width:1px;height:23px;background:#8a8a8a"></div><svg class="a" style="left:525px;top:61px" width="10" height="14" viewBox="0 0 10 14"><path d="M0 0l9 6.5L0 13z" fill="#2e9ae0"/></svg><div class="a " style="left:526px;top:140px;width:474px;height:42px;background:#d6950f;border:1px solid #3a2a08;border-right:none"></div><div class="a " style="left:527px;top:141px;width:473px;height:20px;background:#da9b15"></div><div class="t" style="left:533px;top:148px;font-size:11px;color:#2a2208">ZOOM0001</div><svg class="a" style="left:527px;top:160px" width="473" height="22" viewBox="0 0 473 22"><rect x="0" y="10" width="473" height="1.6" fill="#5a4512"/><path d="M0.5 7.2V14.4M1.5 6.9V14.7M2.5 7.8V13.8M3.5 7.7V13.9M4.5 8.1V13.5M5.5 9.0V12.6M6.5 9.3V12.3M7.5 8.7V12.9M8.5 9.3V12.3M9.5 9.5V12.1M10.5 9.2V12.4M11.5 9.5V12.1M12.5 9.5V12.1M13.5 9.7V11.9M14.5 9.7V11.9M15.5 9.9V11.7M16.5 9.8V11.8M17.5 9.8V11.8M18.5 9.9V11.7M19.5 9.9V11.7M111.5 4.0V17.6M112.5 6.6V15.0M113.5 4.2V17.4M114.5 5.1V16.5M115.5 6.3V15.3M116.5 7.3V14.3M117.5 4.9V16.7M118.5 6.3V15.3M119.5 5.8V15.8M120.5 5.5V16.1M121.5 6.2V15.4M122.5 5.9V15.7M123.5 7.3V14.3M124.5 6.5V15.1M125.5 7.4V14.2M126.5 6.6V15.0M127.5 6.8V14.8M128.5 8.4V13.2M129.5 8.4V13.2M130.5 8.4V13.2M131.5 7.3V14.3M132.5 8.2V13.4M133.5 8.0V13.6M134.5 8.6V13.0M135.5 8.4V13.2M136.5 8.6V13.0M137.5 8.7V12.9M138.5 8.5V13.1M139.5 8.6V13.0M140.5 8.3V13.3M141.5 8.6V13.0M142.5 8.5V13.1M143.5 8.6V13.0M144.5 8.5V13.1M145.5 8.9V12.7M146.5 9.3V12.3M147.5 8.9V12.7M148.5 8.8V12.8M149.5 8.9V12.7M150.5 9.2V12.4M151.5 9.2V12.4M152.5 9.5V12.1M153.5 9.2V12.4M154.5 9.4V12.2M155.5 9.5V12.1M156.5 9.7V11.9M157.5 9.3V12.3M158.5 9.3V12.3M159.5 9.7V11.9M160.5 9.5V12.1M161.5 9.6V12.0M162.5 9.7V11.9M163.5 9.7V11.9M164.5 9.6V12.0M165.5 9.6V12.0M166.5 9.8V11.8M167.5 9.7V11.9M168.5 9.9V11.7M169.5 9.7V11.9M170.5 9.8V11.8M171.5 9.7V11.9M172.5 9.7V11.9M173.5 9.8V11.8M174.5 9.7V11.9M175.5 9.9V11.7M176.5 9.9V11.7M177.5 9.8V11.8M178.5 10.0V11.6M179.5 9.9V11.7M180.5 9.9V11.7M208.5 4.6V17.0M209.5 6.6V15.0M210.5 7.2V14.4M211.5 4.9V16.7M212.5 6.9V14.7M213.5 5.4V16.2M214.5 5.9V15.7M215.5 7.4V14.2M216.5 7.4V14.2M217.5 7.5V14.1M218.5 7.4V14.2M219.5 7.7V13.9M220.5 7.9V13.7M221.5 8.0V13.6M222.5 7.7V13.9M223.5 8.4V13.2M224.5 8.6V13.0M225.5 8.4V13.2M226.5 9.0V12.6M227.5 9.0V12.6M228.5 8.5V13.1M229.5 9.0V12.6M230.5 9.1V12.5M231.5 9.5V12.1M232.5 9.3V12.3M233.5 9.3V12.3M234.5 9.6V12.0M235.5 9.4V12.2M236.5 9.4V12.2M237.5 9.7V11.9M238.5 9.5V12.1M239.5 9.6V12.0M240.5 9.6V12.0M241.5 9.7V11.9M242.5 9.6V12.0M243.5 9.7V11.9M244.5 9.9V11.7M245.5 9.9V11.7M246.5 9.8V11.8M247.5 9.7V11.9M248.5 9.9V11.7M249.5 9.9V11.7M250.5 9.9V11.7M251.5 9.9V11.7M252.5 9.9V11.7M224.5 8.9V12.7M225.5 8.9V12.7M226.5 8.9V12.7M227.5 9.2V12.4M228.5 9.3V12.3M229.5 9.1V12.5M230.5 9.6V12.0M231.5 9.4V12.2M232.5 9.4V12.2M233.5 9.6V12.0M234.5 9.7V11.9M235.5 9.6V12.0M236.5 9.8V11.8M237.5 9.8V11.8M238.5 9.8V11.8M239.5 9.8V11.8M240.5 9.9V11.7M241.5 9.9V11.7M242.5 9.9V11.7M243.5 9.9V11.7M244.5 10.0V11.6M245.5 9.9V11.7M246.5 10.0V11.6M247.5 10.0V11.6M248.5 10.0V11.6M249.5 10.0V11.6M250.5 10.0V11.6M251.5 10.0V11.6M252.5 10.1V11.5M253.5 10.0V11.6M348.5 6.8V14.8M349.5 5.2V16.4M350.5 5.5V16.1M351.5 7.5V14.1M352.5 7.5V14.1M353.5 6.6V15.0M354.5 7.2V14.4M355.5 7.1V14.5M356.5 8.1V13.5M357.5 8.6V13.0M358.5 8.5V13.1M359.5 8.0V13.6M360.5 8.8V12.8M361.5 8.8V12.8M362.5 8.8V12.8M363.5 8.9V12.7M364.5 9.0V12.6M365.5 8.7V12.9M366.5 9.4V12.2M367.5 9.5V12.1M368.5 9.0V12.6M369.5 9.1V12.5M370.5 9.1V12.5M371.5 9.5V12.1M372.5 9.3V12.3M373.5 9.4V12.2M374.5 9.7V11.9M375.5 9.6V12.0M376.5 9.6V12.0M377.5 9.7V11.9M378.5 9.7V11.9M379.5 9.8V11.8M380.5 9.8V11.8M381.5 9.9V11.7M382.5 9.9V11.7M383.5 9.8V11.8M384.5 9.9V11.7M385.5 9.9V11.7M386.5 10.0V11.6M387.5 9.9V11.7M425.5 5.9V15.7M426.5 5.6V16.0M427.5 6.0V15.6M428.5 6.3V15.3M429.5 7.2V14.4M430.5 8.5V13.1M431.5 7.3V14.3M432.5 8.4V13.2M433.5 8.3V13.3M434.5 7.9V13.7M435.5 8.3V13.3M436.5 8.5V13.1M437.5 8.0V13.6M438.5 8.5V13.1M439.5 8.9V12.7M440.5 9.1V12.5M441.5 8.6V13.0M442.5 9.0V12.6M443.5 8.8V12.8M444.5 9.2V12.4M445.5 9.4V12.2M446.5 9.2V12.4M447.5 9.1V12.5M448.5 9.5V12.1M449.5 9.3V12.3M450.5 9.3V12.3M451.5 9.4V12.2M452.5 9.4V12.2M453.5 9.8V11.8M454.5 9.6V12.0M455.5 9.5V12.1M456.5 9.8V11.8M457.5 9.8V11.8M458.5 9.8V11.8M459.5 9.8V11.8M460.5 9.8V11.8M461.5 9.8V11.8M462.5 9.8V11.8M463.5 9.9V11.7M464.5 9.9V11.7M465.5 9.9V11.7M466.5 9.9V11.7M467.5 10.0V11.6M468.5 9.9V11.7M469.5 9.9V11.7M470.5 10.0V11.6M471.5 10.0V11.6M472.5 10.0V11.6M440.5 5.7V15.9M441.5 6.0V15.6M442.5 5.5V16.1M443.5 6.1V15.5M444.5 7.1V14.5M445.5 7.8V13.8M446.5 7.7V13.9M447.5 8.3V13.3M448.5 7.7V13.9M449.5 7.7V13.9M450.5 8.4V13.2M451.5 9.0V12.6M452.5 9.0V12.6M453.5 8.9V12.7M454.5 8.8V12.8M455.5 8.7V12.9M456.5 9.2V12.4M457.5 9.0V12.6M458.5 9.2V12.4M459.5 9.4V12.2M460.5 9.5V12.1M461.5 9.5V12.1M462.5 9.5V12.1M463.5 9.6V12.0M464.5 9.6V12.0M465.5 9.7V11.9M466.5 9.8V11.8M467.5 9.8V11.8M468.5 9.8V11.8M469.5 9.9V11.7M470.5 9.9V11.7M471.5 9.9V11.7M472.5 9.8V11.8" stroke="#3e300c" stroke-width="1" opacity="0.6"/></svg><div class="a " style="left:526px;top:183px;width:474px;height:42px;background:#d2b6dc;border:1px solid #2a2430;border-right:none"></div><div class="a " style="left:527px;top:184px;width:473px;height:20px;background:#6f6479"></div><div class="t" style="left:533px;top:190.5px;font-size:11px;color:#f0f0f0;-webkit-text-stroke:0.3px #f0f0f0">Drum Machine #1</div><svg class="a" style="left:527px;top:204px" width="473" height="20" viewBox="0 0 473 20"><rect x="390.5" y="10.3" width="33.3" height="2" fill="#6e6478"/><rect x="260.0" y="11.3" width="39.4" height="2" fill="#6e6478"/><rect x="303.3" y="11.3" width="17.8" height="2" fill="#6e6478"/><rect x="325.5" y="11.3" width="39.4" height="2" fill="#6e6478"/><rect x="260.0" y="12.2" width="43.3" height="2" fill="#6e6478"/><rect x="303.3" y="12.2" width="43.8" height="2" fill="#6e6478"/><rect x="172.9" y="12.7" width="104.9" height="2" fill="#6e6478"/><rect x="88.5" y="12.9" width="42.2" height="2" fill="#6e6478"/><rect x="20.8" y="13.2" width="10.0" height="2" fill="#6e6478"/><rect x="0.3" y="13.4" width="16.1" height="2" fill="#6e6478"/><rect x="129.6" y="13.7" width="40.0" height="2" fill="#6e6478"/><rect x="108.0" y="13.9" width="16.1" height="2" fill="#6e6478"/><rect x="42.5" y="14.9" width="20.0" height="2" fill="#6e6478"/><rect x="303.3" y="15.6" width="53.3" height="2" fill="#6e6478"/><rect x="219.0" y="15.8" width="69.9" height="2" fill="#6e6478"/><rect x="85.8" y="16.1" width="30.5" height="2" fill="#6e6478"/><rect x="172.9" y="16.3" width="46.1" height="2" fill="#6e6478"/><rect x="111.8" y="16.5" width="59.4" height="2" fill="#6e6478"/><rect x="64.1" y="16.8" width="24.4" height="2" fill="#6e6478"/><rect x="15.8" y="17.0" width="19.4" height="2" fill="#6e6478"/><rect x="348" y="6" width="12" height="2" fill="#6e6478"/><rect x="369" y="7.4" width="8" height="2" fill="#6e6478"/><rect x="348" y="8.5" width="15" height="2" fill="#6e6478"/><rect x="363" y="9" width="110" height="1.6" fill="#6e6478"/><rect x="434" y="5.5" width="39" height="4" fill="#6e6478"/><rect x="444" y="6.5" width="12" height="1.8" fill="#d2b6dc"/></svg><div class="a " style="left:0px;top:386px;width:1000px;height:5px;background:#262626"></div><div class="a " style="left:4px;top:386px;width:996px;height:2px;background:#555"></div><div class="a " style="left:4px;top:391px;width:1000px;height:539px;background:#383838;border:2px solid #777;border-radius:6px"></div><div class="a " style="left:6px;top:393px;width:21px;height:269px;background:#2e2e2e;border-radius:0 0 4px 4px"></div><div class="a " style="left:27px;top:393px;width:2px;height:532px;background:#d0b4dc"></div><div class="a " style="left:29px;top:393px;width:27px;height:532px;background:#3a3a3a"></div><div class="a " style="left:56px;top:393px;width:1px;height:517px;background:#2e2e2e"></div><div class="t" style="left:17px;top:525px;font-size:10px;color:#f07a10;transform:translate(-50%,-50%) rotate(-90deg)">CLIP</div><div class="t" style="left:17px;top:795px;font-size:10px;color:#8e9aa6;transform:translate(-50%,-50%) rotate(-90deg)">TRACK</div><div class="t" style="left:43px;top:663px;font-size:11px;font-weight:bold;color:#ececec;transform:translate(-50%,-50%) rotate(-90deg)">DRUM MACHINE #1</div><div class="a " style="left:57px;top:393px;width:73px;height:47px;background:#363636"></div><div class="a " style="left:130px;top:393px;width:40px;height:47px;background:#444"></div><svg class="a" style="left:69px;top:411px" width="11" height="11" viewBox="0 0 11 11"><rect x="0" y="0" width="11" height="11" fill="#dcdcdc"/><rect x="0" y="3.3" width="11" height="0.8" fill="#363636"/><rect x="0" y="7.1" width="11" height="0.8" fill="#363636"/><rect x="0" y="2.6" width="6" height="2.2" fill="#303030"/><rect x="0" y="6.4" width="6" height="2.2" fill="#303030"/></svg><svg class="a" style="left:105px;top:411px" width="11" height="11" viewBox="0 0 11 11"><g fill="#f7870f"><rect x="0" y="0" width="2.1" height="2.1"/><rect x="0" y="3" width="2.1" height="2.1"/><rect x="0" y="6" width="2.1" height="2.1"/><rect x="0" y="9" width="2.1" height="2.1"/><rect x="3" y="0" width="2.1" height="2.1"/><rect x="3" y="3" width="2.1" height="2.1"/><rect x="3" y="6" width="2.1" height="2.1"/><rect x="3" y="9" width="2.1" height="2.1"/><rect x="6" y="0" width="2.1" height="2.1"/><rect x="6" y="3" width="2.1" height="2.1"/><rect x="6" y="6" width="2.1" height="2.1"/><rect x="6" y="9" width="2.1" height="2.1"/><rect x="9" y="0" width="2.1" height="2.1"/><rect x="9" y="3" width="2.1" height="2.1"/><rect x="9" y="6" width="2.1" height="2.1"/><rect x="9" y="9" width="2.1" height="2.1"/></g></svg><div class="a " style="left:92px;top:437px;width:36px;height:2px;background:#f07a10"></div><svg class="a" style="left:144px;top:409px" width="22" height="16" viewBox="0 0 22 16"><path d="M1 0v13l3-3 2.5 5 2-1-2.5-5h4z" fill="#eee"/><path d="M15 7h5l-2.5 3z" fill="#9a9a9a"/></svg><div class="a " style="left:170px;top:393px;width:830px;height:17px;background:#2a2a2a"></div><div class="a " style="left:170px;top:410px;width:830px;height:15px;background:#2a2a2a"></div><div class="a " style="left:194px;top:410px;width:806px;height:16px;background:#4c4c4c;border-top:1.5px solid #636363;border-bottom:1.5px solid #6a6a6a"></div><div class="a " style="left:170px;top:425px;width:830px;height:15px;background:#2e2e2e"></div><div class="a " style="left:57px;top:440px;width:113px;height:469px;background:#2a2a2a"></div><div class="a " style="left:56px;top:440px;width:3px;height:469px;background:#d0b4dc;border-radius:0 0 2px 2px"></div><div class="a " style="left:170px;top:440px;width:830px;height:469px;background:#8b8b8b"></div><div class="a" style="left:60px;top:440px;width:110px;height:469px;overflow:hidden"><div class="a" style="left:0;top:-6.91px;width:110px;height:16.61px;background:linear-gradient(#2f2f2f,#272727)"></div><div class="t" style="left:6px;top:-1.4px;font-size:11px;color:#8e8e8e">1</div><div class="t" style="left:19px;top:-1.9px;font-size:11px;color:#ececec;-webkit-text-stroke:0.2px #ececec">ZOOM0001-...</div><svg class="a" style="left:98px;top:-1.4px" width="8" height="9" viewBox="0 0 8 9"><path d="M0 2.5h2.2L7 0v9L2.2 6.5H0z" fill="#8a8a8a"/></svg><div class="a" style="left:0;top:9.70px;width:110px;height:16.61px;background:linear-gradient(#2f2f2f,#272727)"></div><div class="t" style="left:6px;top:15.2px;font-size:11px;color:#8e8e8e">1</div><div class="t" style="left:19px;top:14.7px;font-size:11px;color:#ececec;-webkit-text-stroke:0.2px #ececec">ZOOM0001-...</div><svg class="a" style="left:98px;top:15.2px" width="8" height="9" viewBox="0 0 8 9"><path d="M0 2.5h2.2L7 0v9L2.2 6.5H0z" fill="#8a8a8a"/></svg><div class="a" style="left:0;top:26.31px;width:110px;height:16.61px;background:linear-gradient(#2f2f2f,#272727)"></div><div class="t" style="left:6px;top:31.8px;font-size:11px;color:#8e8e8e">1</div><div class="t" style="left:19px;top:31.3px;font-size:11px;color:#ececec;-webkit-text-stroke:0.2px #ececec">ZOOM0001-...</div><svg class="a" style="left:98px;top:31.8px" width="8" height="9" viewBox="0 0 8 9"><path d="M0 2.5h2.2L7 0v9L2.2 6.5H0z" fill="#8a8a8a"/></svg><div class="a" style="left:0;top:42.92px;width:110px;height:16.61px;background:linear-gradient(#2f2f2f,#272727)"></div><div class="t" style="left:6px;top:48.4px;font-size:11px;color:#8e8e8e">1</div><div class="t" style="left:19px;top:47.9px;font-size:11px;color:#ececec;-webkit-text-stroke:0.2px #ececec">ZOOM0001-...</div><svg class="a" style="left:98px;top:48.4px" width="8" height="9" viewBox="0 0 8 9"><path d="M0 2.5h2.2L7 0v9L2.2 6.5H0z" fill="#8a8a8a"/></svg><div class="a" style="left:0;top:59.53px;width:110px;height:16.61px;background:linear-gradient(#2f2f2f,#272727)"></div><div class="t" style="left:6px;top:65.0px;font-size:11px;color:#8e8e8e">1</div><div class="t" style="left:19px;top:64.5px;font-size:11px;color:#ececec;-webkit-text-stroke:0.2px #ececec">ZOOM0001-...</div><svg class="a" style="left:98px;top:65.0px" width="8" height="9" viewBox="0 0 8 9"><path d="M0 2.5h2.2L7 0v9L2.2 6.5H0z" fill="#8a8a8a"/></svg><div class="a" style="left:0;top:76.14px;width:110px;height:16.61px;background:linear-gradient(#2f2f2f,#272727)"></div><div class="t" style="left:6px;top:81.6px;font-size:11px;color:#8e8e8e">1</div><div class="t" style="left:19px;top:81.1px;font-size:11px;color:#ececec;-webkit-text-stroke:0.2px #ececec">ZOOM0001-...</div><svg class="a" style="left:98px;top:81.6px" width="8" height="9" viewBox="0 0 8 9"><path d="M0 2.5h2.2L7 0v9L2.2 6.5H0z" fill="#8a8a8a"/></svg><div class="a" style="left:0;top:92.75px;width:110px;height:16.61px;background:linear-gradient(#2f2f2f,#272727)"></div><div class="t" style="left:6px;top:98.2px;font-size:11px;color:#8e8e8e">1</div><div class="t" style="left:19px;top:97.8px;font-size:11px;color:#ececec;-webkit-text-stroke:0.2px #ececec">ZOOM0001-...</div><svg class="a" style="left:98px;top:98.2px" width="8" height="9" viewBox="0 0 8 9"><path d="M0 2.5h2.2L7 0v9L2.2 6.5H0z" fill="#8a8a8a"/></svg><div class="a" style="left:0;top:109.36px;width:110px;height:16.61px;background:linear-gradient(#2f2f2f,#272727)"></div><div class="t" style="left:6px;top:114.9px;font-size:11px;color:#8e8e8e">1</div><div class="t" style="left:19px;top:114.4px;font-size:11px;color:#ececec;-webkit-text-stroke:0.2px #ececec">ZOOM0001-...</div><svg class="a" style="left:98px;top:114.9px" width="8" height="9" viewBox="0 0 8 9"><path d="M0 2.5h2.2L7 0v9L2.2 6.5H0z" fill="#8a8a8a"/></svg><div class="a" style="left:0;top:125.97px;width:110px;height:16.61px;background:linear-gradient(#2f2f2f,#272727)"></div><div class="t" style="left:6px;top:131.5px;font-size:11px;color:#8e8e8e">1</div><div class="t" style="left:19px;top:131.0px;font-size:11px;color:#ececec;-webkit-text-stroke:0.2px #ececec">ZOOM0001-...</div><svg class="a" style="left:98px;top:131.5px" width="8" height="9" viewBox="0 0 8 9"><path d="M0 2.5h2.2L7 0v9L2.2 6.5H0z" fill="#8a8a8a"/></svg><div class="a" style="left:0;top:142.58px;width:110px;height:16.61px;background:linear-gradient(#2f2f2f,#272727)"></div><div class="t" style="left:6px;top:148.1px;font-size:11px;color:#8e8e8e">1</div><div class="t" style="left:19px;top:147.6px;font-size:11px;color:#ececec;-webkit-text-stroke:0.2px #ececec">ZOOM0001-...</div><svg class="a" style="left:98px;top:148.1px" width="8" height="9" viewBox="0 0 8 9"><path d="M0 2.5h2.2L7 0v9L2.2 6.5H0z" fill="#8a8a8a"/></svg><div class="a" style="left:0;top:159.19px;width:110px;height:16.61px;background:linear-gradient(#2f2f2f,#272727)"></div><div class="t" style="left:6px;top:164.7px;font-size:11px;color:#8e8e8e">1</div><div class="t" style="left:19px;top:164.2px;font-size:11px;color:#ececec;-webkit-text-stroke:0.2px #ececec">ZOOM0001-...</div><svg class="a" style="left:98px;top:164.7px" width="8" height="9" viewBox="0 0 8 9"><path d="M0 2.5h2.2L7 0v9L2.2 6.5H0z" fill="#8a8a8a"/></svg><div class="a" style="left:0;top:175.80px;width:110px;height:16.61px;background:linear-gradient(#2f2f2f,#272727)"></div><div class="t" style="left:6px;top:181.3px;font-size:11px;color:#8e8e8e">1</div><div class="t" style="left:19px;top:180.8px;font-size:11px;color:#ececec;-webkit-text-stroke:0.2px #ececec">ZOOM0001-...</div><svg class="a" style="left:98px;top:181.3px" width="8" height="9" viewBox="0 0 8 9"><path d="M0 2.5h2.2L7 0v9L2.2 6.5H0z" fill="#8a8a8a"/></svg><div class="a" style="left:0;top:192.41px;width:110px;height:16.61px;background:linear-gradient(#2f2f2f,#272727)"></div><div class="t" style="left:6px;top:197.9px;font-size:11px;color:#8e8e8e">1</div><div class="t" style="left:19px;top:197.4px;font-size:11px;color:#ececec;-webkit-text-stroke:0.2px #ececec">ZOOM0001-...</div><svg class="a" style="left:98px;top:197.9px" width="8" height="9" viewBox="0 0 8 9"><path d="M0 2.5h2.2L7 0v9L2.2 6.5H0z" fill="#8a8a8a"/></svg><div class="a" style="left:0;top:209.02px;width:110px;height:16.61px;background:linear-gradient(#2f2f2f,#272727)"></div><div class="t" style="left:6px;top:214.5px;font-size:11px;color:#8e8e8e">1</div><div class="t" style="left:19px;top:214.0px;font-size:11px;color:#ececec;-webkit-text-stroke:0.2px #ececec">ZOOM0001-...</div><svg class="a" style="left:98px;top:214.5px" width="8" height="9" viewBox="0 0 8 9"><path d="M0 2.5h2.2L7 0v9L2.2 6.5H0z" fill="#8a8a8a"/></svg><div class="a" style="left:0;top:225.63px;width:110px;height:16.61px;background:linear-gradient(#2f2f2f,#272727)"></div><div class="t" style="left:6px;top:231.1px;font-size:11px;color:#8e8e8e">1</div><div class="t" style="left:19px;top:230.6px;font-size:11px;color:#ececec;-webkit-text-stroke:0.2px #ececec">ZOOM0001-...</div><svg class="a" style="left:98px;top:231.1px" width="8" height="9" viewBox="0 0 8 9"><path d="M0 2.5h2.2L7 0v9L2.2 6.5H0z" fill="#8a8a8a"/></svg><div class="a" style="left:0;top:242.24px;width:110px;height:16.61px;background:linear-gradient(#2f2f2f,#272727)"></div><div class="t" style="left:6px;top:247.7px;font-size:11px;color:#8e8e8e">1</div><div class="t" style="left:19px;top:247.2px;font-size:11px;color:#ececec;-webkit-text-stroke:0.2px #ececec">ZOOM0001-...</div><svg class="a" style="left:98px;top:247.7px" width="8" height="9" viewBox="0 0 8 9"><path d="M0 2.5h2.2L7 0v9L2.2 6.5H0z" fill="#8a8a8a"/></svg><div class="a" style="left:0;top:258.85px;width:110px;height:16.61px;background:linear-gradient(#2f2f2f,#272727)"></div><div class="t" style="left:6px;top:264.3px;font-size:11px;color:#8e8e8e">1</div><div class="t" style="left:19px;top:263.8px;font-size:11px;color:#ececec;-webkit-text-stroke:0.2px #ececec">ZOOM0001-...</div><svg class="a" style="left:98px;top:264.3px" width="8" height="9" viewBox="0 0 8 9"><path d="M0 2.5h2.2L7 0v9L2.2 6.5H0z" fill="#8a8a8a"/></svg><div class="a" style="left:0;top:275.46px;width:110px;height:16.61px;background:linear-gradient(#2f2f2f,#272727)"></div><div class="t" style="left:6px;top:281.0px;font-size:11px;color:#8e8e8e">1</div><div class="t" style="left:19px;top:280.5px;font-size:11px;color:#ececec;-webkit-text-stroke:0.2px #ececec">ZOOM0001-...</div><svg class="a" style="left:98px;top:281.0px" width="8" height="9" viewBox="0 0 8 9"><path d="M0 2.5h2.2L7 0v9L2.2 6.5H0z" fill="#8a8a8a"/></svg><div class="a" style="left:0;top:292.07px;width:110px;height:16.61px;background:linear-gradient(#2f2f2f,#272727)"></div><div class="t" style="left:6px;top:297.6px;font-size:11px;color:#8e8e8e">1</div><div class="t" style="left:19px;top:297.1px;font-size:11px;color:#ececec;-webkit-text-stroke:0.2px #ececec">ZOOM0001-...</div><svg class="a" style="left:98px;top:297.6px" width="8" height="9" viewBox="0 0 8 9"><path d="M0 2.5h2.2L7 0v9L2.2 6.5H0z" fill="#8a8a8a"/></svg><div class="a" style="left:0;top:308.68px;width:110px;height:16.61px;background:linear-gradient(#2f2f2f,#272727)"></div><div class="t" style="left:6px;top:314.2px;font-size:11px;color:#8e8e8e">1</div><div class="t" style="left:19px;top:313.7px;font-size:11px;color:#ececec;-webkit-text-stroke:0.2px #ececec">ZOOM0001-...</div><svg class="a" style="left:98px;top:314.2px" width="8" height="9" viewBox="0 0 8 9"><path d="M0 2.5h2.2L7 0v9L2.2 6.5H0z" fill="#8a8a8a"/></svg><div class="a" style="left:0;top:325.29px;width:110px;height:16.61px;background:linear-gradient(#2f2f2f,#272727)"></div><div class="t" style="left:6px;top:330.8px;font-size:11px;color:#8e8e8e">1</div><div class="t" style="left:19px;top:330.3px;font-size:11px;color:#ececec;-webkit-text-stroke:0.2px #ececec">ZOOM0001-...</div><svg class="a" style="left:98px;top:330.8px" width="8" height="9" viewBox="0 0 8 9"><path d="M0 2.5h2.2L7 0v9L2.2 6.5H0z" fill="#8a8a8a"/></svg><div class="a" style="left:0;top:341.90px;width:110px;height:16.61px;background:linear-gradient(#2f2f2f,#272727)"></div><div class="t" style="left:6px;top:347.4px;font-size:11px;color:#8e8e8e">1</div><div class="t" style="left:19px;top:346.9px;font-size:11px;color:#ececec;-webkit-text-stroke:0.2px #ececec">ZOOM0001-...</div><svg class="a" style="left:98px;top:347.4px" width="8" height="9" viewBox="0 0 8 9"><path d="M0 2.5h2.2L7 0v9L2.2 6.5H0z" fill="#8a8a8a"/></svg><div class="a" style="left:0;top:358.51px;width:110px;height:16.61px;background:linear-gradient(#2f2f2f,#272727)"></div><div class="t" style="left:6px;top:364.0px;font-size:11px;color:#8e8e8e">1</div><div class="t" style="left:19px;top:363.5px;font-size:11px;color:#ececec;-webkit-text-stroke:0.2px #ececec">ZOOM0001-...</div><svg class="a" style="left:98px;top:364.0px" width="8" height="9" viewBox="0 0 8 9"><path d="M0 2.5h2.2L7 0v9L2.2 6.5H0z" fill="#8a8a8a"/></svg><div class="a" style="left:0;top:375.12px;width:110px;height:16.61px;background:linear-gradient(#2f2f2f,#272727)"></div><div class="t" style="left:6px;top:380.6px;font-size:11px;color:#8e8e8e">1</div><div class="t" style="left:19px;top:380.1px;font-size:11px;color:#ececec;-webkit-text-stroke:0.2px #ececec">ZOOM0001-...</div><svg class="a" style="left:98px;top:380.6px" width="8" height="9" viewBox="0 0 8 9"><path d="M0 2.5h2.2L7 0v9L2.2 6.5H0z" fill="#8a8a8a"/></svg><div class="a" style="left:0;top:391.73px;width:110px;height:16.61px;background:linear-gradient(#2f2f2f,#272727)"></div><div class="t" style="left:6px;top:397.2px;font-size:11px;color:#8e8e8e">1</div><div class="t" style="left:19px;top:396.7px;font-size:11px;color:#ececec;-webkit-text-stroke:0.2px #ececec">ZOOM0001-...</div><svg class="a" style="left:98px;top:397.2px" width="8" height="9" viewBox="0 0 8 9"><path d="M0 2.5h2.2L7 0v9L2.2 6.5H0z" fill="#8a8a8a"/></svg><div class="a" style="left:0;top:408.34px;width:110px;height:16.61px;background:linear-gradient(#2f2f2f,#272727)"></div><div class="t" style="left:6px;top:413.8px;font-size:11px;color:#8e8e8e">1</div><div class="t" style="left:19px;top:413.3px;font-size:11px;color:#ececec;-webkit-text-stroke:0.2px #ececec">ZOOM0001-...</div><svg class="a" style="left:98px;top:413.8px" width="8" height="9" viewBox="0 0 8 9"><path d="M0 2.5h2.2L7 0v9L2.2 6.5H0z" fill="#8a8a8a"/></svg><div class="a" style="left:0;top:424.95px;width:110px;height:16.61px;background:linear-gradient(#2f2f2f,#272727)"></div><div class="t" style="left:6px;top:430.5px;font-size:11px;color:#8e8e8e">1</div><div class="t" style="left:19px;top:430.0px;font-size:11px;color:#ececec;-webkit-text-stroke:0.2px #ececec">ZOOM0001-...</div><svg class="a" style="left:98px;top:430.5px" width="8" height="9" viewBox="0 0 8 9"><path d="M0 2.5h2.2L7 0v9L2.2 6.5H0z" fill="#8a8a8a"/></svg><div class="a" style="left:0;top:441.56px;width:110px;height:16.61px;background:linear-gradient(#2f2f2f,#272727)"></div><div class="t" style="left:6px;top:447.1px;font-size:11px;color:#8e8e8e">1</div><div class="t" style="left:19px;top:446.6px;font-size:11px;color:#ececec;-webkit-text-stroke:0.2px #ececec">ZOOM0001-...</div><svg class="a" style="left:98px;top:447.1px" width="8" height="9" viewBox="0 0 8 9"><path d="M0 2.5h2.2L7 0v9L2.2 6.5H0z" fill="#8a8a8a"/></svg><div class="a" style="left:0;top:458.17px;width:110px;height:16.61px;background:linear-gradient(#2f2f2f,#272727)"></div><div class="t" style="left:6px;top:463.7px;font-size:11px;color:#8e8e8e">1</div><div class="t" style="left:19px;top:463.2px;font-size:11px;color:#ececec;-webkit-text-stroke:0.2px #ececec">ZOOM0001-...</div><svg class="a" style="left:98px;top:463.7px" width="8" height="9" viewBox="0 0 8 9"><path d="M0 2.5h2.2L7 0v9L2.2 6.5H0z" fill="#8a8a8a"/></svg><div class="a" style="left:0;top:474.78px;width:110px;height:16.61px;background:linear-gradient(#2f2f2f,#272727)"></div><div class="t" style="left:6px;top:480.3px;font-size:11px;color:#8e8e8e">1</div><div class="t" style="left:19px;top:479.8px;font-size:11px;color:#ececec;-webkit-text-stroke:0.2px #ececec">ZOOM0001-...</div><svg class="a" style="left:98px;top:480.3px" width="8" height="9" viewBox="0 0 8 9"><path d="M0 2.5h2.2L7 0v9L2.2 6.5H0z" fill="#8a8a8a"/></svg></div><div class="a " style="left:60px;top:450px;width:110px;height:1px;background:#3e3e3e"></div><div class="a " style="left:170px;top:450px;width:830px;height:1px;background:#5c5c5c"></div><div class="a " style="left:170px;top:451px;width:830px;height:1px;background:#909090"></div><div class="a " style="left:60px;top:466px;width:110px;height:1px;background:#3e3e3e"></div><div class="a " style="left:170px;top:466px;width:830px;height:1px;background:#5c5c5c"></div><div class="a " style="left:170px;top:467px;width:830px;height:1px;background:#909090"></div><div class="a " style="left:60px;top:483px;width:110px;height:1px;background:#3e3e3e"></div><div class="a " style="left:170px;top:483px;width:830px;height:1px;background:#5c5c5c"></div><div class="a " style="left:170px;top:484px;width:830px;height:1px;background:#909090"></div><div class="a " style="left:60px;top:500px;width:110px;height:1px;background:#3e3e3e"></div><div class="a " style="left:170px;top:500px;width:830px;height:1px;background:#5c5c5c"></div><div class="a " style="left:170px;top:501px;width:830px;height:1px;background:#909090"></div><div class="a " style="left:60px;top:516px;width:110px;height:1px;background:#3e3e3e"></div><div class="a " style="left:170px;top:516px;width:830px;height:1px;background:#5c5c5c"></div><div class="a " style="left:170px;top:517px;width:830px;height:1px;background:#909090"></div><div class="a " style="left:60px;top:533px;width:110px;height:1px;background:#3e3e3e"></div><div class="a " style="left:170px;top:533px;width:830px;height:1px;background:#5c5c5c"></div><div class="a " style="left:170px;top:534px;width:830px;height:1px;background:#909090"></div><div class="a " style="left:60px;top:549px;width:110px;height:1px;background:#3e3e3e"></div><div class="a " style="left:170px;top:549px;width:830px;height:1px;background:#5c5c5c"></div><div class="a " style="left:170px;top:550px;width:830px;height:1px;background:#909090"></div><div class="a " style="left:60px;top:566px;width:110px;height:1px;background:#3e3e3e"></div><div class="a " style="left:170px;top:566px;width:830px;height:1px;background:#5c5c5c"></div><div class="a " style="left:170px;top:567px;width:830px;height:1px;background:#909090"></div><div class="a " style="left:60px;top:583px;width:110px;height:1px;background:#3e3e3e"></div><div class="a " style="left:170px;top:583px;width:830px;height:1px;background:#5c5c5c"></div><div class="a " style="left:170px;top:584px;width:830px;height:1px;background:#909090"></div><div class="a " style="left:60px;top:599px;width:110px;height:1px;background:#3e3e3e"></div><div class="a " style="left:170px;top:599px;width:830px;height:1px;background:#5c5c5c"></div><div class="a " style="left:170px;top:600px;width:830px;height:1px;background:#909090"></div><div class="a " style="left:60px;top:616px;width:110px;height:1px;background:#3e3e3e"></div><div class="a " style="left:170px;top:616px;width:830px;height:1px;background:#5c5c5c"></div><div class="a " style="left:170px;top:617px;width:830px;height:1px;background:#909090"></div><div class="a " style="left:60px;top:632px;width:110px;height:1px;background:#3e3e3e"></div><div class="a " style="left:170px;top:632px;width:830px;height:1px;background:#5c5c5c"></div><div class="a " style="left:170px;top:633px;width:830px;height:1px;background:#909090"></div><div class="a " style="left:60px;top:649px;width:110px;height:1px;background:#3e3e3e"></div><div class="a " style="left:170px;top:649px;width:830px;height:1px;background:#5c5c5c"></div><div class="a " style="left:170px;top:650px;width:830px;height:1px;background:#909090"></div><div class="a " style="left:60px;top:666px;width:110px;height:1px;background:#3e3e3e"></div><div class="a " style="left:170px;top:666px;width:830px;height:1px;background:#5c5c5c"></div><div class="a " style="left:170px;top:667px;width:830px;height:1px;background:#909090"></div><div class="a " style="left:60px;top:682px;width:110px;height:1px;background:#3e3e3e"></div><div class="a " style="left:170px;top:682px;width:830px;height:1px;background:#5c5c5c"></div><div class="a " style="left:170px;top:683px;width:830px;height:1px;background:#909090"></div><div class="a " style="left:60px;top:699px;width:110px;height:1px;background:#3e3e3e"></div><div class="a " style="left:170px;top:699px;width:830px;height:1px;background:#5c5c5c"></div><div class="a " style="left:170px;top:700px;width:830px;height:1px;background:#909090"></div><div class="a " style="left:60px;top:715px;width:110px;height:1px;background:#3e3e3e"></div><div class="a " style="left:170px;top:715px;width:830px;height:1px;background:#5c5c5c"></div><div class="a " style="left:170px;top:716px;width:830px;height:1px;background:#909090"></div><div class="a " style="left:60px;top:732px;width:110px;height:1px;background:#3e3e3e"></div><div class="a " style="left:170px;top:732px;width:830px;height:1px;background:#5c5c5c"></div><div class="a " style="left:170px;top:733px;width:830px;height:1px;background:#909090"></div><div class="a " style="left:60px;top:749px;width:110px;height:1px;background:#3e3e3e"></div><div class="a " style="left:170px;top:749px;width:830px;height:1px;background:#5c5c5c"></div><div class="a " style="left:170px;top:750px;width:830px;height:1px;background:#909090"></div><div class="a " style="left:60px;top:765px;width:110px;height:1px;background:#3e3e3e"></div><div class="a " style="left:170px;top:765px;width:830px;height:1px;background:#5c5c5c"></div><div class="a " style="left:170px;top:766px;width:830px;height:1px;background:#909090"></div><div class="a " style="left:60px;top:782px;width:110px;height:1px;background:#3e3e3e"></div><div class="a " style="left:170px;top:782px;width:830px;height:1px;background:#5c5c5c"></div><div class="a " style="left:170px;top:783px;width:830px;height:1px;background:#909090"></div><div class="a " style="left:60px;top:799px;width:110px;height:1px;background:#3e3e3e"></div><div class="a " style="left:170px;top:799px;width:830px;height:1px;background:#5c5c5c"></div><div class="a " style="left:170px;top:800px;width:830px;height:1px;background:#909090"></div><div class="a " style="left:60px;top:815px;width:110px;height:1px;background:#3e3e3e"></div><div class="a " style="left:170px;top:815px;width:830px;height:1px;background:#5c5c5c"></div><div class="a " style="left:170px;top:816px;width:830px;height:1px;background:#909090"></div><div class="a " style="left:60px;top:832px;width:110px;height:1px;background:#3e3e3e"></div><div class="a " style="left:170px;top:832px;width:830px;height:1px;background:#5c5c5c"></div><div class="a " style="left:170px;top:833px;width:830px;height:1px;background:#909090"></div><div class="a " style="left:60px;top:848px;width:110px;height:1px;background:#3e3e3e"></div><div class="a " style="left:170px;top:848px;width:830px;height:1px;background:#5c5c5c"></div><div class="a " style="left:170px;top:849px;width:830px;height:1px;background:#909090"></div><div class="a " style="left:60px;top:865px;width:110px;height:1px;background:#3e3e3e"></div><div class="a " style="left:170px;top:865px;width:830px;height:1px;background:#5c5c5c"></div><div class="a " style="left:170px;top:866px;width:830px;height:1px;background:#909090"></div><div class="a " style="left:60px;top:882px;width:110px;height:1px;background:#3e3e3e"></div><div class="a " style="left:170px;top:882px;width:830px;height:1px;background:#5c5c5c"></div><div class="a " style="left:170px;top:883px;width:830px;height:1px;background:#909090"></div><div class="a " style="left:60px;top:898px;width:110px;height:1px;background:#3e3e3e"></div><div class="a " style="left:170px;top:898px;width:830px;height:1px;background:#5c5c5c"></div><div class="a " style="left:170px;top:899px;width:830px;height:1px;background:#909090"></div><div class="a " style="left:194px;top:440px;width:1px;height:469px;background:#4a4a4a"></div><div class="a " style="left:194px;top:425px;width:1px;height:15px;background:#555"></div><div class="a " style="left:194px;top:396px;width:1px;height:14px;background:#888"></div><div class="t" style="left:197px;top:400px;font-size:11px;font-weight:bold;color:#e8e8e8">1.1</div><div class="a " style="left:233px;top:440px;width:1px;height:469px;background:#6e6e6e"></div><div class="a " style="left:233px;top:425px;width:1px;height:15px;background:#555"></div><div class="a " style="left:233px;top:408px;width:1px;height:2px;background:#666"></div><div class="a " style="left:272px;top:440px;width:1px;height:469px;background:#6e6e6e"></div><div class="a " style="left:272px;top:425px;width:1px;height:15px;background:#555"></div><div class="a " style="left:272px;top:408px;width:1px;height:2px;background:#666"></div><div class="a " style="left:311px;top:440px;width:1px;height:469px;background:#6e6e6e"></div><div class="a " style="left:311px;top:425px;width:1px;height:15px;background:#555"></div><div class="a " style="left:311px;top:408px;width:1px;height:2px;background:#666"></div><div class="a " style="left:351px;top:440px;width:1px;height:469px;background:#5e5e5e"></div><div class="a " style="left:351px;top:425px;width:1px;height:15px;background:#555"></div><div class="a " style="left:351px;top:406px;width:1px;height:4px;background:#777"></div><div class="t" style="left:354px;top:400px;font-size:11px;font-weight:bold;color:#e8e8e8">1.2</div><div class="a " style="left:390px;top:440px;width:1px;height:469px;background:#6e6e6e"></div><div class="a " style="left:390px;top:425px;width:1px;height:15px;background:#555"></div><div class="a " style="left:390px;top:408px;width:1px;height:2px;background:#666"></div><div class="a " style="left:429px;top:440px;width:1px;height:469px;background:#6e6e6e"></div><div class="a " style="left:429px;top:425px;width:1px;height:15px;background:#555"></div><div class="a " style="left:429px;top:408px;width:1px;height:2px;background:#666"></div><div class="a " style="left:468px;top:440px;width:1px;height:469px;background:#6e6e6e"></div><div class="a " style="left:468px;top:425px;width:1px;height:15px;background:#555"></div><div class="a " style="left:468px;top:408px;width:1px;height:2px;background:#666"></div><div class="a " style="left:507px;top:440px;width:1px;height:469px;background:#5e5e5e"></div><div class="a " style="left:507px;top:425px;width:1px;height:15px;background:#555"></div><div class="a " style="left:507px;top:406px;width:1px;height:4px;background:#777"></div><div class="t" style="left:510px;top:400px;font-size:11px;font-weight:bold;color:#e8e8e8">1.3</div><div class="a " style="left:547px;top:440px;width:1px;height:469px;background:#6e6e6e"></div><div class="a " style="left:547px;top:425px;width:1px;height:15px;background:#555"></div><div class="a " style="left:547px;top:408px;width:1px;height:2px;background:#666"></div><div class="a " style="left:586px;top:440px;width:1px;height:469px;background:#6e6e6e"></div><div class="a " style="left:586px;top:425px;width:1px;height:15px;background:#555"></div><div class="a " style="left:586px;top:408px;width:1px;height:2px;background:#666"></div><div class="a " style="left:625px;top:440px;width:1px;height:469px;background:#6e6e6e"></div><div class="a " style="left:625px;top:425px;width:1px;height:15px;background:#555"></div><div class="a " style="left:625px;top:408px;width:1px;height:2px;background:#666"></div><div class="a " style="left:664px;top:440px;width:1px;height:469px;background:#5e5e5e"></div><div class="a " style="left:664px;top:425px;width:1px;height:15px;background:#555"></div><div class="a " style="left:664px;top:406px;width:1px;height:4px;background:#777"></div><div class="t" style="left:667px;top:400px;font-size:11px;font-weight:bold;color:#e8e8e8">1.4</div><div class="a " style="left:703px;top:440px;width:1px;height:469px;background:#6e6e6e"></div><div class="a " style="left:703px;top:425px;width:1px;height:15px;background:#555"></div><div class="a " style="left:703px;top:408px;width:1px;height:2px;background:#666"></div><div class="a " style="left:743px;top:440px;width:1px;height:469px;background:#6e6e6e"></div><div class="a " style="left:743px;top:425px;width:1px;height:15px;background:#555"></div><div class="a " style="left:743px;top:408px;width:1px;height:2px;background:#666"></div><div class="a " style="left:782px;top:440px;width:1px;height:469px;background:#6e6e6e"></div><div class="a " style="left:782px;top:425px;width:1px;height:15px;background:#555"></div><div class="a " style="left:782px;top:408px;width:1px;height:2px;background:#666"></div><div class="a " style="left:821px;top:440px;width:1px;height:469px;background:#4a4a4a"></div><div class="a " style="left:821px;top:425px;width:1px;height:15px;background:#555"></div><div class="a " style="left:821px;top:396px;width:1px;height:14px;background:#888"></div><div class="t" style="left:824px;top:400px;font-size:11px;font-weight:bold;color:#e8e8e8">2.1</div><div class="a " style="left:860px;top:440px;width:1px;height:469px;background:#6e6e6e"></div><div class="a " style="left:860px;top:425px;width:1px;height:15px;background:#555"></div><div class="a " style="left:860px;top:408px;width:1px;height:2px;background:#666"></div><div class="a " style="left:899px;top:440px;width:1px;height:469px;background:#6e6e6e"></div><div class="a " style="left:899px;top:425px;width:1px;height:15px;background:#555"></div><div class="a " style="left:899px;top:408px;width:1px;height:2px;background:#666"></div><div class="a " style="left:939px;top:440px;width:1px;height:469px;background:#6e6e6e"></div><div class="a " style="left:939px;top:425px;width:1px;height:15px;background:#555"></div><div class="a " style="left:939px;top:408px;width:1px;height:2px;background:#666"></div><div class="a " style="left:978px;top:440px;width:1px;height:469px;background:#5e5e5e"></div><div class="a " style="left:978px;top:425px;width:1px;height:15px;background:#555"></div><div class="a " style="left:978px;top:406px;width:1px;height:4px;background:#777"></div><div class="t" style="left:981px;top:400px;font-size:11px;font-weight:bold;color:#e8e8e8">2.2</div><div class="a " style="left:169px;top:440px;width:2px;height:469px;background:#333"></div><div class="a " style="left:171px;top:440px;width:23px;height:469px;background:linear-gradient(90deg,rgba(0,0,0,0.28),rgba(0,0,0,0.02))"></div><svg class="a" style="left:193px;top:395px" width="10" height="14" viewBox="0 0 10 14"><path d="M0 0l9 6.5L0 13z" fill="#2e9ae0"/></svg><div class="a " style="left:194px;top:408px;width:1px;height:32px;background:#7a7a7a"></div><svg class="a" style="left:194px;top:426px" width="13" height="14" viewBox="0 0 13 14"><path d="M0 0h8l4.8 7-4.8 7H0z" fill="#d4b8dc"/><path d="M1.6 1.6h5.6l3.6 5.4-3.6 5.4H1.6z" fill="#d4b8dc" stroke="#3a3440" stroke-width="0.9"/></svg><div class="a" style="left:899px;top:440.0px;width:60px;height:11.0px;background:#d4bcd9;border:1.5px solid #3a3438;border-top:none;overflow:hidden"><div class="t" style="left:2px;top:-4.3px;font-size:10.6px;color:#686868">B3</div></div><div class="a" style="left:664px;top:501.0px;width:71px;height:16.0px;background:#d4bcd9;border:1.5px solid #3a3438;overflow:hidden"><div class="t" style="left:2px;top:1.1px;font-size:10.6px;color:#686868">G3</div></div><div class="a" style="left:742px;top:501.0px;width:32px;height:16.0px;background:#d4bcd9;border:1.5px solid #3a3438;overflow:hidden"><div class="t" style="left:2px;top:1.1px;font-size:10.6px;color:#686868">G3</div></div><div class="a" style="left:782px;top:501.0px;width:71px;height:16.0px;background:#d4bcd9;border:1.5px solid #3a3438;overflow:hidden"><div class="t" style="left:2px;top:1.1px;font-size:10.6px;color:#686868">G3</div></div><div class="a" style="left:664px;top:567.0px;width:78px;height:17.0px;background:#d4bcd9;border:1.5px solid #3a3438;overflow:hidden"><div class="t" style="left:2px;top:1.6px;font-size:10.6px;color:#686868">D#3</div></div><div class="a" style="left:742px;top:567.0px;width:79px;height:17.0px;background:#d4bcd9;border:1.5px solid #3a3438;overflow:hidden"><div class="t" style="left:2px;top:1.6px;font-size:10.6px;color:#686868">D#3</div></div><div class="a" style="left:507px;top:600.0px;width:189px;height:17.0px;background:#d4bcd9;border:1.5px solid #3a3438;overflow:hidden"><div class="t" style="left:2px;top:1.8px;font-size:10.6px;color:#686868">C#3</div></div><div class="a" style="left:355px;top:617.0px;width:76px;height:16.0px;background:#d4bcd9;border:1.5px solid #3a3438;overflow:hidden"><div class="t" style="left:2px;top:1.4px;font-size:10.6px;color:#686868">C3</div></div><div class="a" style="left:233px;top:633.0px;width:18px;height:17.0px;background:#d4bcd9;border:1.5px solid #3a3438;overflow:hidden"><div class="t" style="left:2px;top:2.0px;font-size:10.6px;color:#686868"></div></div><div class="a" style="left:196px;top:650.0px;width:29px;height:17.0px;background:#d4bcd9;border:1.5px solid #3a3438;overflow:hidden"><div class="t" style="left:2px;top:1.6px;font-size:10.6px;color:#686868">A#2</div></div><div class="a" style="left:429px;top:667.0px;width:72px;height:16.0px;background:#d4bcd9;border:1.5px solid #3a3438;overflow:hidden"><div class="t" style="left:2px;top:1.2px;font-size:10.6px;color:#686868">A2</div></div><div class="a" style="left:390px;top:683.0px;width:29px;height:17.0px;background:#d4bcd9;border:1.5px solid #3a3438;overflow:hidden"><div class="t" style="left:2px;top:1.8px;font-size:10.6px;color:#686868">G#2</div></div><div class="a" style="left:272px;top:750.0px;width:36px;height:16.0px;background:#d4bcd9;border:1.5px solid #3a3438;overflow:hidden"><div class="t" style="left:2px;top:1.3px;font-size:10.6px;color:#686868">E2</div></div><div class="a" style="left:742px;top:800.0px;width:96px;height:16.0px;background:#d4bcd9;border:1.5px solid #3a3438;overflow:hidden"><div class="t" style="left:2px;top:1.1px;font-size:10.6px;color:#686868">C#2</div></div><div class="a" style="left:590px;top:816.0px;width:126px;height:17.0px;background:#d4bcd9;border:1.5px solid #3a3438;overflow:hidden"><div class="t" style="left:2px;top:1.7px;font-size:10.6px;color:#686868">C2</div></div><div class="a" style="left:350px;top:833.0px;width:55px;height:16.0px;background:#d4bcd9;border:1.5px solid #3a3438;overflow:hidden"><div class="t" style="left:2px;top:1.3px;font-size:10.6px;color:#686868">B1</div></div><div class="a" style="left:507px;top:849.0px;width:83px;height:17.0px;background:#d4bcd9;border:1.5px solid #3a3438;overflow:hidden"><div class="t" style="left:2px;top:1.9px;font-size:10.6px;color:#686868">A#1</div></div><div class="a" style="left:397px;top:866.0px;width:107px;height:17.0px;background:#d4bcd9;border:1.5px solid #3a3438;overflow:hidden"><div class="t" style="left:2px;top:1.6px;font-size:10.6px;color:#686868">A1</div></div><div class="a" style="left:311px;top:883.0px;width:44px;height:16.0px;background:#d4bcd9;border:1.5px solid #3a3438;overflow:hidden"><div class="t" style="left:2px;top:1.2px;font-size:10.6px;color:#686868">G#1</div></div><div class="a" style="left:224px;top:899.0px;width:35px;height:10.0px;background:#d4bcd9;border:1.5px solid #3a3438;border-bottom:none;overflow:hidden"><div class="t" style="left:2px;top:1.8px;font-size:10.6px;color:#686868">G1</div></div><div class="a " style="left:57px;top:909px;width:943px;height:16px;background:#383838"></div><div class="a " style="left:170px;top:909px;width:830px;height:4px;background:#333"></div><svg class="a" style="left:37px;top:917px" width="11" height="10" viewBox="0 0 11 10"><path d="M5.5 0L11 3 5.5 6 0 3z" fill="#bbb"/><path d="M0 5l5.5 3 5.5-3M0 7.5l5.5 3 5.5-3" fill="none" stroke="#bbb" stroke-width="1.2"/></svg><div class="a " style="left:131px;top:913px;width:15px;height:15px;background:#2e2e2e;border-radius:4px"></div><svg class="a" style="left:135px;top:917px" width="8" height="10" viewBox="0 0 8 10"><path d="M0 2.5h2.2L7 0v10L2.2 7.5H0z" fill="#f7870f"/></svg><svg class="a" style="left:152px;top:917px" width="14" height="9" viewBox="0 0 14 9"><g fill="none" stroke="#d0d0d0" stroke-width="1"><rect x="0.5" y="2.5" width="2.5" height="2.5"/><rect x="4.8" y="0.5" width="2.5" height="2.5"/><rect x="9" y="3.5" width="2.5" height="2.5"/><path d="M1.75 5v4M6 3v6M10.25 6v3"/></g></svg><svg class="a" style="left:174px;top:918px" width="8" height="8" viewBox="0 0 8 8"><path d="M7 0v8L0 4z" fill="#8a8a8a"/></svg><div class="a " style="left:189px;top:916px;width:811px;height:9px;background:#5a5a5a;border-radius:5px 0 0 5px"></div></body></html>
